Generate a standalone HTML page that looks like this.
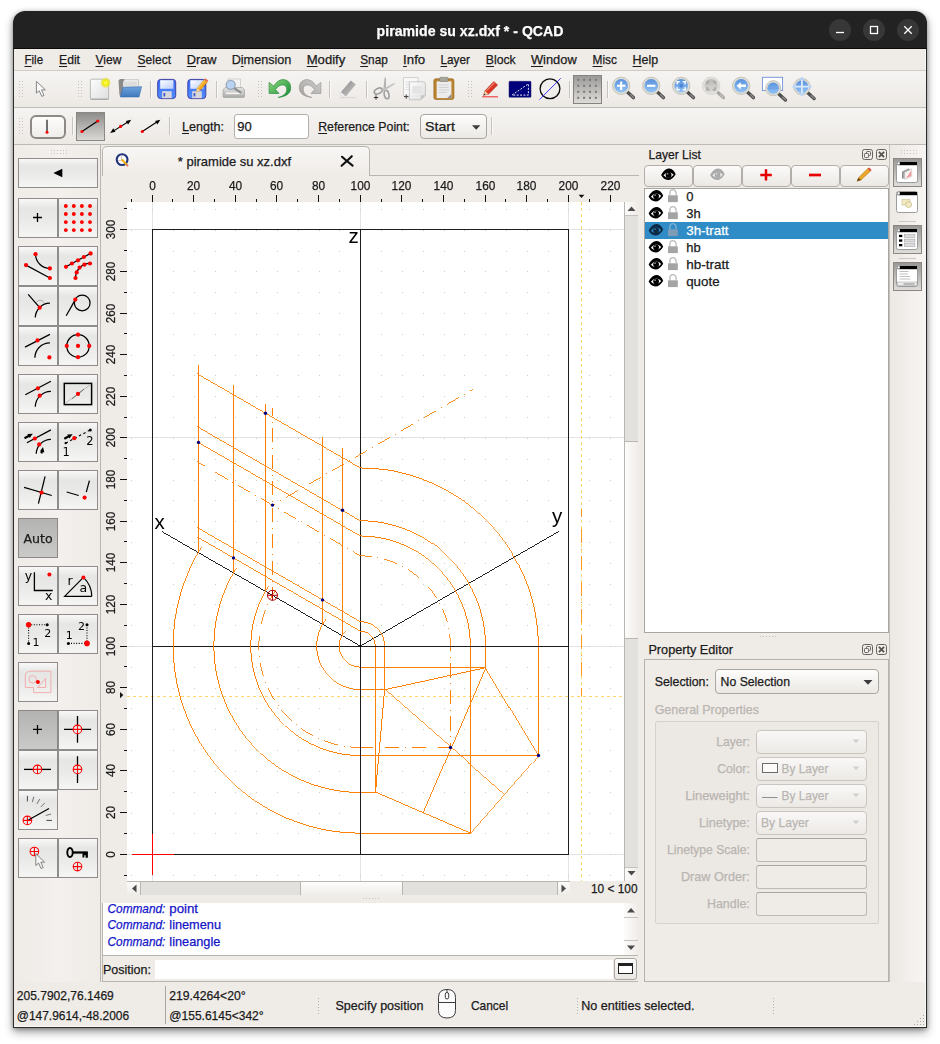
<!DOCTYPE html>
<html><head><meta charset="utf-8"><title>piramide su xz.dxf * - QCAD</title>
<style>
html,body{margin:0;padding:0;background:#fff;}
body{width:940px;height:1044px;position:relative;overflow:hidden;font-family:"Liberation Sans",sans-serif;font-size:13px;color:#1a1a1a;}
.a{position:absolute;box-sizing:border-box;}
#win{left:13px;top:11px;width:914px;height:1017px;background:#efebe7;border-radius:12px 12px 0 0;
 box-shadow:0 0 0 1px rgba(0,0,0,0.0), 0 4px 10px rgba(0,0,0,0.38), 0 1px 4px rgba(0,0,0,0.3);}
#title{left:13px;top:11px;width:914px;height:38px;background:#222222;border-radius:12px 12px 0 0;}
.wb{width:22px;height:22px;border-radius:11px;background:#373737;top:19px;}
.btn{border:1px solid #9e9a95;background:linear-gradient(#fbfaf9,#e6e3df);}
.btnp{border:1px solid #8c8883;background:linear-gradient(#b4b2af,#cfcdca);}
.tb{border:1px solid #8e8d8b;background:linear-gradient(#f8f8f8 0%,#e6e6e5 24%,#e9e9e8 50%,#f5f5f4 100%);}
.tbp{border:1px solid #8a8987;background:linear-gradient(#b3b3b2,#cacac9);}
.combo{border:1px solid #aaa6a1;border-radius:4px;background:linear-gradient(#fdfdfc,#ebe8e4);}
.combod{border:1px solid #c9c5c0;border-radius:4px;background:linear-gradient(#f9f8f7,#ece9e5);}
.edit{border:1px solid #b2aea9;border-radius:3px;background:#fff;}
.editd{border:1px solid #bdb9b4;border-top-color:#a9a5a0;border-radius:3px;background:#efebe7;}
svg{position:absolute;left:0;top:0;}
text{font-family:"Liberation Sans",sans-serif;font-size:13px;color:#1a1a1a;fill:currentColor;stroke:currentColor;stroke-width:0.25px;}
.dj{font-family:"DejaVu Sans",sans-serif;}
</style></head><body>

<div class="a" id="win"></div>
<div class="a " style="left:13px;top:49px;width:1px;height:979px;background:#2b2b2b"></div>
<div class="a " style="left:926px;top:49px;width:1px;height:979px;background:#2b2b2b"></div>
<div class="a " style="left:13px;top:1027px;width:914px;height:1px;background:#2b2b2b"></div>
<div class="a " style="left:925px;top:49px;width:1px;height:978px;background:#faf9f8"></div>
<div class="a " style="left:14px;top:1026px;width:912px;height:1px;background:#faf9f8"></div>
<div class="a" id="title"></div>
<div class="a " style="left:13px;top:48px;width:914px;height:1px;background:#0a0a0a"></div>
<div class="a wb" style="left:829px"></div>
<div class="a wb" style="left:863px"></div>
<div class="a wb" style="left:897px"></div>
<div class="a " style="left:14px;top:70px;width:912px;height:1px;background:#cfcbc6"></div>
<div class="a " style="left:14px;top:71px;width:912px;height:36px;background:linear-gradient(#f6f4f2,#ece9e5)"></div>
<div class="a " style="left:14px;top:107px;width:912px;height:1px;background:#c2beb9"></div>
<div class="a " style="left:14px;top:108px;width:912px;height:36px;background:linear-gradient(#f6f4f2,#ece9e5)"></div>
<div class="a " style="left:14px;top:144px;width:912px;height:1px;background:#bdb9b4"></div>
<div class="a" style="left:19px;top:81px;width:1px;height:16px;background:repeating-linear-gradient(#c5c1bc 0 1px,transparent 1px 3px)"></div><div class="a" style="left:22px;top:81px;width:1px;height:16px;background:repeating-linear-gradient(#c5c1bc 0 1px,transparent 1px 3px)"></div>
<div class="a" style="left:78px;top:81px;width:1px;height:16px;background:repeating-linear-gradient(#c5c1bc 0 1px,transparent 1px 3px)"></div><div class="a" style="left:81px;top:81px;width:1px;height:16px;background:repeating-linear-gradient(#c5c1bc 0 1px,transparent 1px 3px)"></div>
<div class="a" style="left:258px;top:81px;width:1px;height:16px;background:repeating-linear-gradient(#c5c1bc 0 1px,transparent 1px 3px)"></div><div class="a" style="left:261px;top:81px;width:1px;height:16px;background:repeating-linear-gradient(#c5c1bc 0 1px,transparent 1px 3px)"></div>
<div class="a" style="left:468px;top:81px;width:1px;height:16px;background:repeating-linear-gradient(#c5c1bc 0 1px,transparent 1px 3px)"></div><div class="a" style="left:471px;top:81px;width:1px;height:16px;background:repeating-linear-gradient(#c5c1bc 0 1px,transparent 1px 3px)"></div>
<div class="a" style="left:19px;top:118px;width:1px;height:16px;background:repeating-linear-gradient(#c5c1bc 0 1px,transparent 1px 3px)"></div><div class="a" style="left:22px;top:118px;width:1px;height:16px;background:repeating-linear-gradient(#c5c1bc 0 1px,transparent 1px 3px)"></div>
<div class="a " style="left:150px;top:81px;width:1px;height:17px;background:#c6c2bd"></div>
<div class="a " style="left:151px;top:81px;width:1px;height:17px;background:#fbfaf9"></div>
<div class="a " style="left:216px;top:81px;width:1px;height:17px;background:#c6c2bd"></div>
<div class="a " style="left:217px;top:81px;width:1px;height:17px;background:#fbfaf9"></div>
<div class="a " style="left:329px;top:81px;width:1px;height:17px;background:#c6c2bd"></div>
<div class="a " style="left:330px;top:81px;width:1px;height:17px;background:#fbfaf9"></div>
<div class="a " style="left:366px;top:81px;width:1px;height:17px;background:#c6c2bd"></div>
<div class="a " style="left:367px;top:81px;width:1px;height:17px;background:#fbfaf9"></div>
<div class="a " style="left:569px;top:81px;width:1px;height:17px;background:#c6c2bd"></div>
<div class="a " style="left:570px;top:81px;width:1px;height:17px;background:#fbfaf9"></div>
<div class="a " style="left:607px;top:81px;width:1px;height:17px;background:#c6c2bd"></div>
<div class="a " style="left:608px;top:81px;width:1px;height:17px;background:#fbfaf9"></div>
<div class="a " style="left:72px;top:117px;width:1px;height:18px;background:#c6c2bd"></div>
<div class="a " style="left:73px;top:117px;width:1px;height:18px;background:#fbfaf9"></div>
<div class="a " style="left:169px;top:117px;width:1px;height:18px;background:#c6c2bd"></div>
<div class="a " style="left:170px;top:117px;width:1px;height:18px;background:#fbfaf9"></div>
<div class="a " style="left:491px;top:117px;width:1px;height:18px;background:#c6c2bd"></div>
<div class="a " style="left:492px;top:117px;width:1px;height:18px;background:#fbfaf9"></div>
<div class="a " style="left:573px;top:75px;width:29px;height:29px;border:1px solid #858380;background:linear-gradient(#9b9a98,#dedcd9)"></div>
<div class="a " style="left:30px;top:115px;width:36px;height:24px;border:2px solid #8d8a86;border-radius:6px;background:linear-gradient(#fdfdfc,#efedea)"></div>
<div class="a " style="left:76px;top:112px;width:29px;height:29px;border:1px solid #8b8884;background:linear-gradient(#8e8d8b,#dad8d5)"></div>
<div class="a edit" style="left:234px;top:114px;width:75px;height:25px;"></div>
<div class="a combo" style="left:420px;top:114px;width:67px;height:25px;"></div>
<div class="a " style="left:14px;top:145px;width:87px;height:837px;background:linear-gradient(90deg,#efebe7,#f3f0ed 50%,#efebe7)"></div>
<div class="a " style="left:100px;top:145px;width:1px;height:837px;background:#b9b5b0"></div>
<div class="a" style="left:51px;top:150px;width:16px;height:1px;background:repeating-linear-gradient(90deg,#c5c1bc 0 1px,transparent 1px 3px)"></div><div class="a" style="left:51px;top:153px;width:16px;height:1px;background:repeating-linear-gradient(90deg,#c5c1bc 0 1px,transparent 1px 3px)"></div>
<div class="a tb" style="left:18px;top:158px;width:80px;height:30px;"></div>
<div class="a tb" style="left:18px;top:198px;width:40px;height:40px;"></div>
<div class="a tb" style="left:58px;top:198px;width:40px;height:40px;"></div>
<div class="a tb" style="left:18px;top:246px;width:40px;height:40px;"></div>
<div class="a tb" style="left:58px;top:246px;width:40px;height:40px;"></div>
<div class="a tb" style="left:18px;top:286px;width:40px;height:40px;"></div>
<div class="a tb" style="left:58px;top:286px;width:40px;height:40px;"></div>
<div class="a tb" style="left:18px;top:326px;width:40px;height:40px;"></div>
<div class="a tb" style="left:58px;top:326px;width:40px;height:40px;"></div>
<div class="a tb" style="left:18px;top:374px;width:40px;height:40px;"></div>
<div class="a tb" style="left:58px;top:374px;width:40px;height:40px;"></div>
<div class="a tb" style="left:18px;top:422px;width:40px;height:40px;"></div>
<div class="a tb" style="left:58px;top:422px;width:40px;height:40px;"></div>
<div class="a tb" style="left:18px;top:470px;width:40px;height:40px;"></div>
<div class="a tb" style="left:58px;top:470px;width:40px;height:40px;"></div>
<div class="a tbp" style="left:18px;top:518px;width:40px;height:40px;"></div>
<div class="a tb" style="left:18px;top:566px;width:40px;height:40px;"></div>
<div class="a tb" style="left:58px;top:566px;width:40px;height:40px;"></div>
<div class="a tb" style="left:18px;top:614px;width:40px;height:40px;"></div>
<div class="a tb" style="left:58px;top:614px;width:40px;height:40px;"></div>
<div class="a tb" style="left:18px;top:662px;width:40px;height:40px;"></div>
<div class="a tbp" style="left:18px;top:710px;width:40px;height:40px;"></div>
<div class="a tb" style="left:58px;top:710px;width:40px;height:40px;"></div>
<div class="a tb" style="left:18px;top:750px;width:40px;height:40px;"></div>
<div class="a tb" style="left:58px;top:750px;width:40px;height:40px;"></div>
<div class="a tb" style="left:18px;top:790px;width:40px;height:40px;"></div>
<div class="a tb" style="left:18px;top:838px;width:40px;height:40px;"></div>
<div class="a tb" style="left:58px;top:838px;width:40px;height:40px;"></div>
<div class="a " style="left:102px;top:175px;width:537px;height:1px;background:#b9b5b0"></div>
<div class="a " style="left:102px;top:146px;width:268px;height:30px;border:1px solid #b9b5b0;border-bottom:none;border-radius:5px 5px 0 0;background:linear-gradient(#f8f7f5,#efebe7)"></div>
<div class="a " style="left:127px;top:202px;width:497px;height:679px;background:#fff"></div>
<div class="a " style="left:624px;top:202px;width:14px;height:679px;background:#e3e1dd;border-left:1px solid #b9b5b0"></div>
<div class="a " style="left:625px;top:202px;width:13px;height:14px;background:linear-gradient(90deg,#fcfbfa,#efece8);border-bottom:1px solid #c5c1bc"></div>
<div class="a " style="left:625px;top:867px;width:13px;height:14px;background:linear-gradient(90deg,#fcfbfa,#efece8);border-top:1px solid #c5c1bc"></div>
<div class="a " style="left:625px;top:441px;width:13px;height:198px;background:linear-gradient(90deg,#fdfdfc,#f0ede9);border-top:1px solid #b9b5b0;border-bottom:1px solid #b9b5b0"></div>
<div class="a " style="left:127px;top:881px;width:443px;height:14px;background:#e3e1dd;border-top:1px solid #b9b5b0"></div>
<div class="a " style="left:127px;top:882px;width:14px;height:13px;background:linear-gradient(#fcfbfa,#efece8);border-right:1px solid #b9b5b0"></div>
<div class="a " style="left:557px;top:882px;width:13px;height:13px;background:linear-gradient(#fcfbfa,#efece8);border-left:1px solid #b9b5b0"></div>
<div class="a " style="left:300px;top:882px;width:103px;height:13px;background:linear-gradient(#fdfdfc,#f0ede9);border-left:1px solid #b9b5b0;border-right:1px solid #b9b5b0"></div>
<div class="a " style="left:102px;top:903px;width:536px;height:53px;background:#fff;border-left:1px solid #b9b5b0;border-bottom:1px solid #b9b5b0"></div>
<div class="a " style="left:624px;top:903px;width:14px;height:52px;background:#e3e1dd"></div>
<div class="a " style="left:624px;top:903px;width:14px;height:14px;background:linear-gradient(90deg,#fcfbfa,#efece8)"></div>
<div class="a " style="left:624px;top:941px;width:14px;height:14px;background:linear-gradient(90deg,#fcfbfa,#efece8)"></div>
<div class="a " style="left:624px;top:917px;width:14px;height:24px;background:linear-gradient(90deg,#fdfdfc,#f0ede9);border-top:1px solid #c5c1bc;border-bottom:1px solid #c5c1bc"></div>
<div class="a " style="left:102px;top:956px;width:1px;height:26px;background:#b9b5b0"></div>
<div class="a " style="left:102px;top:981px;width:536px;height:1px;background:#b9b5b0"></div>
<div class="a " style="left:155px;top:960px;width:458px;height:19px;background:#fff"></div>
<div class="a " style="left:614px;top:958px;width:23px;height:22px;border:1px solid #aaa6a1;border-radius:3px;background:linear-gradient(#fdfdfc,#e9e6e2)"></div>
<div class="a " style="left:644px;top:165px;width:49px;height:22px;border:1px solid #b2aea9;border-radius:4px;background:linear-gradient(#fcfbfa,#ebe8e4)"></div>
<div class="a " style="left:693px;top:165px;width:49px;height:22px;border:1px solid #b2aea9;border-radius:4px;background:linear-gradient(#fcfbfa,#ebe8e4)"></div>
<div class="a " style="left:742px;top:165px;width:49px;height:22px;border:1px solid #b2aea9;border-radius:4px;background:linear-gradient(#fcfbfa,#ebe8e4)"></div>
<div class="a " style="left:791px;top:165px;width:49px;height:22px;border:1px solid #b2aea9;border-radius:4px;background:linear-gradient(#fcfbfa,#ebe8e4)"></div>
<div class="a " style="left:840px;top:165px;width:49px;height:22px;border:1px solid #b2aea9;border-radius:4px;background:linear-gradient(#fcfbfa,#ebe8e4)"></div>
<div class="a " style="left:644px;top:188px;width:245px;height:445px;background:#fff;border:1px solid #a9a5a0"></div>
<div class="a " style="left:645px;top:222px;width:243px;height:17px;background:#308cc6"></div>
<div class="a " style="left:644px;top:659px;width:245px;height:323px;border:1px solid #b5b1ac;background:#efebe7"></div>
<div class="a combo" style="left:715px;top:669px;width:164px;height:25px;"></div>
<div class="a " style="left:655px;top:721px;width:224px;height:203px;border:1px solid #d5d1cc;border-radius:2px;background:#ece8e4"></div>
<div class="a combod" style="left:756px;top:730px;width:111px;height:24px;"></div>
<div class="a combod" style="left:756px;top:757px;width:111px;height:24px;"></div>
<div class="a combod" style="left:756px;top:784px;width:111px;height:24px;"></div>
<div class="a combod" style="left:756px;top:811px;width:111px;height:24px;"></div>
<div class="a editd" style="left:756px;top:838px;width:111px;height:24px;"></div>
<div class="a editd" style="left:756px;top:865px;width:111px;height:24px;"></div>
<div class="a editd" style="left:756px;top:892px;width:111px;height:24px;"></div>
<div class="a " style="left:762px;top:763px;width:16px;height:10px;border:1px solid #6c6c6c;background:#fcfbfa"></div>
<div class="a " style="left:862px;top:149px;width:11px;height:11px;border:1px solid #65625f;border-radius:2.5px"></div>
<div class="a " style="left:876px;top:149px;width:11px;height:11px;border:1px solid #65625f;border-radius:2.5px"></div>
<div class="a " style="left:862px;top:644px;width:11px;height:11px;border:1px solid #65625f;border-radius:2.5px"></div>
<div class="a " style="left:876px;top:644px;width:11px;height:11px;border:1px solid #65625f;border-radius:2.5px"></div>
<div class="a" style="left:760px;top:636px;width:16px;height:1px;background:repeating-linear-gradient(90deg,#c5c1bc 0 1px,transparent 1px 3px)"></div>
<div class="a" style="left:363px;top:898px;width:16px;height:1px;background:repeating-linear-gradient(90deg,#c5c1bc 0 1px,transparent 1px 3px)"></div>
<div class="a " style="left:890px;top:145px;width:36px;height:837px;background:linear-gradient(90deg,#ece8e4,#f3f0ed 60%,#f7f5f3)"></div>
<div class="a " style="left:889px;top:145px;width:1px;height:837px;background:#c4c0bb"></div>
<div class="a" style="left:901px;top:150px;width:16px;height:1px;background:repeating-linear-gradient(90deg,#c5c1bc 0 1px,transparent 1px 3px)"></div><div class="a" style="left:901px;top:153px;width:16px;height:1px;background:repeating-linear-gradient(90deg,#c5c1bc 0 1px,transparent 1px 3px)"></div>
<div class="a " style="left:893px;top:158px;width:29px;height:29px;border:1px solid #8b8884;background:linear-gradient(#9a9896,#deddda)"></div>
<div class="a " style="left:893px;top:225px;width:29px;height:29px;border:1px solid #8b8884;background:linear-gradient(#9a9896,#deddda)"></div>
<div class="a " style="left:893px;top:262px;width:29px;height:29px;border:1px solid #8b8884;background:linear-gradient(#9a9896,#deddda)"></div>
<div class="a " style="left:899px;top:221px;width:17px;height:1px;background:#cbc7c2"></div>
<div class="a " style="left:899px;top:258px;width:17px;height:1px;background:#cbc7c2"></div>
<div class="a " style="left:165px;top:986px;width:1px;height:38px;background:#a9a5a0"></div>
<div class="a " style="left:318px;top:998px;width:1px;height:16px;background:repeating-linear-gradient(#b5b1ac 0 1px,transparent 1px 3px)"></div>
<div class="a " style="left:577px;top:998px;width:1px;height:16px;background:repeating-linear-gradient(#b5b1ac 0 1px,transparent 1px 3px)"></div>
<div class="a " style="left:773px;top:998px;width:1px;height:16px;background:repeating-linear-gradient(#b5b1ac 0 1px,transparent 1px 3px)"></div>
<div class="a " style="left:923px;top:1024px;width:1px;height:1px;background:#aaa6a1"></div><div class="a " style="left:920px;top:1024px;width:1px;height:1px;background:#aaa6a1"></div><div class="a " style="left:917px;top:1024px;width:1px;height:1px;background:#aaa6a1"></div><div class="a " style="left:914px;top:1024px;width:1px;height:1px;background:#aaa6a1"></div><div class="a " style="left:923px;top:1021px;width:1px;height:1px;background:#aaa6a1"></div><div class="a " style="left:920px;top:1021px;width:1px;height:1px;background:#aaa6a1"></div><div class="a " style="left:917px;top:1021px;width:1px;height:1px;background:#aaa6a1"></div><div class="a " style="left:923px;top:1018px;width:1px;height:1px;background:#aaa6a1"></div><div class="a " style="left:920px;top:1018px;width:1px;height:1px;background:#aaa6a1"></div><div class="a " style="left:923px;top:1015px;width:1px;height:1px;background:#aaa6a1"></div>
<svg width="940" height="1044" viewBox="0 0 940 1044">
<defs><clipPath id="cv"><rect x="127" y="202" width="497" height="679"/></clipPath></defs>
<g shape-rendering="crispEdges" stroke="#111" stroke-width="1">
<line x1="131.50" y1="199.00" x2="131.50" y2="202.00" />
<line x1="152.50" y1="195.00" x2="152.50" y2="202.00" />
<line x1="172.50" y1="199.00" x2="172.50" y2="202.00" />
<line x1="193.50" y1="195.00" x2="193.50" y2="202.00" />
<line x1="214.50" y1="199.00" x2="214.50" y2="202.00" />
<line x1="235.50" y1="195.00" x2="235.50" y2="202.00" />
<line x1="256.50" y1="199.00" x2="256.50" y2="202.00" />
<line x1="276.50" y1="195.00" x2="276.50" y2="202.00" />
<line x1="297.50" y1="199.00" x2="297.50" y2="202.00" />
<line x1="318.50" y1="195.00" x2="318.50" y2="202.00" />
<line x1="339.50" y1="199.00" x2="339.50" y2="202.00" />
<line x1="360.50" y1="195.00" x2="360.50" y2="202.00" />
<line x1="381.50" y1="199.00" x2="381.50" y2="202.00" />
<line x1="401.50" y1="195.00" x2="401.50" y2="202.00" />
<line x1="422.50" y1="199.00" x2="422.50" y2="202.00" />
<line x1="443.50" y1="195.00" x2="443.50" y2="202.00" />
<line x1="464.50" y1="199.00" x2="464.50" y2="202.00" />
<line x1="485.50" y1="195.00" x2="485.50" y2="202.00" />
<line x1="505.50" y1="199.00" x2="505.50" y2="202.00" />
<line x1="526.50" y1="195.00" x2="526.50" y2="202.00" />
<line x1="547.50" y1="199.00" x2="547.50" y2="202.00" />
<line x1="568.50" y1="195.00" x2="568.50" y2="202.00" />
<line x1="589.50" y1="199.00" x2="589.50" y2="202.00" />
<line x1="610.50" y1="195.00" x2="610.50" y2="202.00" />
<line x1="124.00" y1="875.50" x2="127.00" y2="875.50" />
<line x1="120.00" y1="854.50" x2="127.00" y2="854.50" />
<line x1="124.00" y1="833.50" x2="127.00" y2="833.50" />
<line x1="120.00" y1="812.50" x2="127.00" y2="812.50" />
<line x1="124.00" y1="791.50" x2="127.00" y2="791.50" />
<line x1="120.00" y1="770.50" x2="127.00" y2="770.50" />
<line x1="124.00" y1="750.50" x2="127.00" y2="750.50" />
<line x1="120.00" y1="729.50" x2="127.00" y2="729.50" />
<line x1="124.00" y1="708.50" x2="127.00" y2="708.50" />
<line x1="120.00" y1="687.50" x2="127.00" y2="687.50" />
<line x1="124.00" y1="666.50" x2="127.00" y2="666.50" />
<line x1="120.00" y1="646.50" x2="127.00" y2="646.50" />
<line x1="124.00" y1="625.50" x2="127.00" y2="625.50" />
<line x1="120.00" y1="604.50" x2="127.00" y2="604.50" />
<line x1="124.00" y1="583.50" x2="127.00" y2="583.50" />
<line x1="120.00" y1="562.50" x2="127.00" y2="562.50" />
<line x1="124.00" y1="541.50" x2="127.00" y2="541.50" />
<line x1="120.00" y1="521.50" x2="127.00" y2="521.50" />
<line x1="124.00" y1="500.50" x2="127.00" y2="500.50" />
<line x1="120.00" y1="479.50" x2="127.00" y2="479.50" />
<line x1="124.00" y1="458.50" x2="127.00" y2="458.50" />
<line x1="120.00" y1="437.50" x2="127.00" y2="437.50" />
<line x1="124.00" y1="417.50" x2="127.00" y2="417.50" />
<line x1="120.00" y1="396.50" x2="127.00" y2="396.50" />
<line x1="124.00" y1="375.50" x2="127.00" y2="375.50" />
<line x1="120.00" y1="354.50" x2="127.00" y2="354.50" />
<line x1="124.00" y1="333.50" x2="127.00" y2="333.50" />
<line x1="120.00" y1="313.50" x2="127.00" y2="313.50" />
<line x1="124.00" y1="292.50" x2="127.00" y2="292.50" />
<line x1="120.00" y1="271.50" x2="127.00" y2="271.50" />
<line x1="124.00" y1="250.50" x2="127.00" y2="250.50" />
<line x1="120.00" y1="229.50" x2="127.00" y2="229.50" />
<line x1="124.00" y1="208.50" x2="127.00" y2="208.50" />
</g>
<path d="M578.6 194.8h5.8l-2.900 3.300z" fill="#111"/>
<path d="M120 692v6.200l3.300-3.100z" fill="#111"/>
<g clip-path="url(#cv)"><g shape-rendering="crispEdges" fill="none" stroke-width="1">
<g stroke="#e3e3e3"><line x1="152.50" y1="202.00" x2="152.50" y2="881.00" /><line x1="360.50" y1="202.00" x2="360.50" y2="881.00" /><line x1="568.50" y1="202.00" x2="568.50" y2="881.00" /><line x1="127.00" y1="854.50" x2="624.00" y2="854.50" /><line x1="127.00" y1="646.50" x2="624.00" y2="646.50" /><line x1="127.00" y1="437.50" x2="624.00" y2="437.50" /><line x1="127.00" y1="229.50" x2="624.00" y2="229.50" /></g>
<path stroke="#cbcbcb" d="M131 875.5h1M152 875.5h1M173 875.5h1M194 875.5h1M215 875.5h1M235 875.5h1M256 875.5h1M277 875.5h1M298 875.5h1M319 875.5h1M339 875.5h1M360 875.5h1M381 875.5h1M402 875.5h1M423 875.5h1M444 875.5h1M464 875.5h1M485 875.5h1M506 875.5h1M527 875.5h1M548 875.5h1M568 875.5h1M589 875.5h1M610 875.5h1M131 854.5h1M152 854.5h1M173 854.5h1M194 854.5h1M215 854.5h1M235 854.5h1M256 854.5h1M277 854.5h1M298 854.5h1M319 854.5h1M339 854.5h1M360 854.5h1M381 854.5h1M402 854.5h1M423 854.5h1M444 854.5h1M464 854.5h1M485 854.5h1M506 854.5h1M527 854.5h1M548 854.5h1M568 854.5h1M589 854.5h1M610 854.5h1M131 833.5h1M152 833.5h1M173 833.5h1M194 833.5h1M215 833.5h1M235 833.5h1M256 833.5h1M277 833.5h1M298 833.5h1M319 833.5h1M339 833.5h1M360 833.5h1M381 833.5h1M402 833.5h1M423 833.5h1M444 833.5h1M464 833.5h1M485 833.5h1M506 833.5h1M527 833.5h1M548 833.5h1M568 833.5h1M589 833.5h1M610 833.5h1M131 813.5h1M152 813.5h1M173 813.5h1M194 813.5h1M215 813.5h1M235 813.5h1M256 813.5h1M277 813.5h1M298 813.5h1M319 813.5h1M339 813.5h1M360 813.5h1M381 813.5h1M402 813.5h1M423 813.5h1M444 813.5h1M464 813.5h1M485 813.5h1M506 813.5h1M527 813.5h1M548 813.5h1M568 813.5h1M589 813.5h1M610 813.5h1M131 792.5h1M152 792.5h1M173 792.5h1M194 792.5h1M215 792.5h1M235 792.5h1M256 792.5h1M277 792.5h1M298 792.5h1M319 792.5h1M339 792.5h1M360 792.5h1M381 792.5h1M402 792.5h1M423 792.5h1M444 792.5h1M464 792.5h1M485 792.5h1M506 792.5h1M527 792.5h1M548 792.5h1M568 792.5h1M589 792.5h1M610 792.5h1M131 771.5h1M152 771.5h1M173 771.5h1M194 771.5h1M215 771.5h1M235 771.5h1M256 771.5h1M277 771.5h1M298 771.5h1M319 771.5h1M339 771.5h1M360 771.5h1M381 771.5h1M402 771.5h1M423 771.5h1M444 771.5h1M464 771.5h1M485 771.5h1M506 771.5h1M527 771.5h1M548 771.5h1M568 771.5h1M589 771.5h1M610 771.5h1M131 750.5h1M152 750.5h1M173 750.5h1M194 750.5h1M215 750.5h1M235 750.5h1M256 750.5h1M277 750.5h1M298 750.5h1M319 750.5h1M339 750.5h1M360 750.5h1M381 750.5h1M402 750.5h1M423 750.5h1M444 750.5h1M464 750.5h1M485 750.5h1M506 750.5h1M527 750.5h1M548 750.5h1M568 750.5h1M589 750.5h1M610 750.5h1M131 729.5h1M152 729.5h1M173 729.5h1M194 729.5h1M215 729.5h1M235 729.5h1M256 729.5h1M277 729.5h1M298 729.5h1M319 729.5h1M339 729.5h1M360 729.5h1M381 729.5h1M402 729.5h1M423 729.5h1M444 729.5h1M464 729.5h1M485 729.5h1M506 729.5h1M527 729.5h1M548 729.5h1M568 729.5h1M589 729.5h1M610 729.5h1M131 708.5h1M152 708.5h1M173 708.5h1M194 708.5h1M215 708.5h1M235 708.5h1M256 708.5h1M277 708.5h1M298 708.5h1M319 708.5h1M339 708.5h1M360 708.5h1M381 708.5h1M402 708.5h1M423 708.5h1M444 708.5h1M464 708.5h1M485 708.5h1M506 708.5h1M527 708.5h1M548 708.5h1M568 708.5h1M589 708.5h1M610 708.5h1M131 688.5h1M152 688.5h1M173 688.5h1M194 688.5h1M215 688.5h1M235 688.5h1M256 688.5h1M277 688.5h1M298 688.5h1M319 688.5h1M339 688.5h1M360 688.5h1M381 688.5h1M402 688.5h1M423 688.5h1M444 688.5h1M464 688.5h1M485 688.5h1M506 688.5h1M527 688.5h1M548 688.5h1M568 688.5h1M589 688.5h1M610 688.5h1M131 667.5h1M152 667.5h1M173 667.5h1M194 667.5h1M215 667.5h1M235 667.5h1M256 667.5h1M277 667.5h1M298 667.5h1M319 667.5h1M339 667.5h1M360 667.5h1M381 667.5h1M402 667.5h1M423 667.5h1M444 667.5h1M464 667.5h1M485 667.5h1M506 667.5h1M527 667.5h1M548 667.5h1M568 667.5h1M589 667.5h1M610 667.5h1M131 646.5h1M152 646.5h1M173 646.5h1M194 646.5h1M215 646.5h1M235 646.5h1M256 646.5h1M277 646.5h1M298 646.5h1M319 646.5h1M339 646.5h1M360 646.5h1M381 646.5h1M402 646.5h1M423 646.5h1M444 646.5h1M464 646.5h1M485 646.5h1M506 646.5h1M527 646.5h1M548 646.5h1M568 646.5h1M589 646.5h1M610 646.5h1M131 625.5h1M152 625.5h1M173 625.5h1M194 625.5h1M215 625.5h1M235 625.5h1M256 625.5h1M277 625.5h1M298 625.5h1M319 625.5h1M339 625.5h1M360 625.5h1M381 625.5h1M402 625.5h1M423 625.5h1M444 625.5h1M464 625.5h1M485 625.5h1M506 625.5h1M527 625.5h1M548 625.5h1M568 625.5h1M589 625.5h1M610 625.5h1M131 604.5h1M152 604.5h1M173 604.5h1M194 604.5h1M215 604.5h1M235 604.5h1M256 604.5h1M277 604.5h1M298 604.5h1M319 604.5h1M339 604.5h1M360 604.5h1M381 604.5h1M402 604.5h1M423 604.5h1M444 604.5h1M464 604.5h1M485 604.5h1M506 604.5h1M527 604.5h1M548 604.5h1M568 604.5h1M589 604.5h1M610 604.5h1M131 584.5h1M152 584.5h1M173 584.5h1M194 584.5h1M215 584.5h1M235 584.5h1M256 584.5h1M277 584.5h1M298 584.5h1M319 584.5h1M339 584.5h1M360 584.5h1M381 584.5h1M402 584.5h1M423 584.5h1M444 584.5h1M464 584.5h1M485 584.5h1M506 584.5h1M527 584.5h1M548 584.5h1M568 584.5h1M589 584.5h1M610 584.5h1M131 563.5h1M152 563.5h1M173 563.5h1M194 563.5h1M215 563.5h1M235 563.5h1M256 563.5h1M277 563.5h1M298 563.5h1M319 563.5h1M339 563.5h1M360 563.5h1M381 563.5h1M402 563.5h1M423 563.5h1M444 563.5h1M464 563.5h1M485 563.5h1M506 563.5h1M527 563.5h1M548 563.5h1M568 563.5h1M589 563.5h1M610 563.5h1M131 542.5h1M152 542.5h1M173 542.5h1M194 542.5h1M215 542.5h1M235 542.5h1M256 542.5h1M277 542.5h1M298 542.5h1M319 542.5h1M339 542.5h1M360 542.5h1M381 542.5h1M402 542.5h1M423 542.5h1M444 542.5h1M464 542.5h1M485 542.5h1M506 542.5h1M527 542.5h1M548 542.5h1M568 542.5h1M589 542.5h1M610 542.5h1M131 521.5h1M152 521.5h1M173 521.5h1M194 521.5h1M215 521.5h1M235 521.5h1M256 521.5h1M277 521.5h1M298 521.5h1M319 521.5h1M339 521.5h1M360 521.5h1M381 521.5h1M402 521.5h1M423 521.5h1M444 521.5h1M464 521.5h1M485 521.5h1M506 521.5h1M527 521.5h1M548 521.5h1M568 521.5h1M589 521.5h1M610 521.5h1M131 500.5h1M152 500.5h1M173 500.5h1M194 500.5h1M215 500.5h1M235 500.5h1M256 500.5h1M277 500.5h1M298 500.5h1M319 500.5h1M339 500.5h1M360 500.5h1M381 500.5h1M402 500.5h1M423 500.5h1M444 500.5h1M464 500.5h1M485 500.5h1M506 500.5h1M527 500.5h1M548 500.5h1M568 500.5h1M589 500.5h1M610 500.5h1M131 480.5h1M152 480.5h1M173 480.5h1M194 480.5h1M215 480.5h1M235 480.5h1M256 480.5h1M277 480.5h1M298 480.5h1M319 480.5h1M339 480.5h1M360 480.5h1M381 480.5h1M402 480.5h1M423 480.5h1M444 480.5h1M464 480.5h1M485 480.5h1M506 480.5h1M527 480.5h1M548 480.5h1M568 480.5h1M589 480.5h1M610 480.5h1M131 459.5h1M152 459.5h1M173 459.5h1M194 459.5h1M215 459.5h1M235 459.5h1M256 459.5h1M277 459.5h1M298 459.5h1M319 459.5h1M339 459.5h1M360 459.5h1M381 459.5h1M402 459.5h1M423 459.5h1M444 459.5h1M464 459.5h1M485 459.5h1M506 459.5h1M527 459.5h1M548 459.5h1M568 459.5h1M589 459.5h1M610 459.5h1M131 438.5h1M152 438.5h1M173 438.5h1M194 438.5h1M215 438.5h1M235 438.5h1M256 438.5h1M277 438.5h1M298 438.5h1M319 438.5h1M339 438.5h1M360 438.5h1M381 438.5h1M402 438.5h1M423 438.5h1M444 438.5h1M464 438.5h1M485 438.5h1M506 438.5h1M527 438.5h1M548 438.5h1M568 438.5h1M589 438.5h1M610 438.5h1M131 417.5h1M152 417.5h1M173 417.5h1M194 417.5h1M215 417.5h1M235 417.5h1M256 417.5h1M277 417.5h1M298 417.5h1M319 417.5h1M339 417.5h1M360 417.5h1M381 417.5h1M402 417.5h1M423 417.5h1M444 417.5h1M464 417.5h1M485 417.5h1M506 417.5h1M527 417.5h1M548 417.5h1M568 417.5h1M589 417.5h1M610 417.5h1M131 396.5h1M152 396.5h1M173 396.5h1M194 396.5h1M215 396.5h1M235 396.5h1M256 396.5h1M277 396.5h1M298 396.5h1M319 396.5h1M339 396.5h1M360 396.5h1M381 396.5h1M402 396.5h1M423 396.5h1M444 396.5h1M464 396.5h1M485 396.5h1M506 396.5h1M527 396.5h1M548 396.5h1M568 396.5h1M589 396.5h1M610 396.5h1M131 375.5h1M152 375.5h1M173 375.5h1M194 375.5h1M215 375.5h1M235 375.5h1M256 375.5h1M277 375.5h1M298 375.5h1M319 375.5h1M339 375.5h1M360 375.5h1M381 375.5h1M402 375.5h1M423 375.5h1M444 375.5h1M464 375.5h1M485 375.5h1M506 375.5h1M527 375.5h1M548 375.5h1M568 375.5h1M589 375.5h1M610 375.5h1M131 355.5h1M152 355.5h1M173 355.5h1M194 355.5h1M215 355.5h1M235 355.5h1M256 355.5h1M277 355.5h1M298 355.5h1M319 355.5h1M339 355.5h1M360 355.5h1M381 355.5h1M402 355.5h1M423 355.5h1M444 355.5h1M464 355.5h1M485 355.5h1M506 355.5h1M527 355.5h1M548 355.5h1M568 355.5h1M589 355.5h1M610 355.5h1M131 334.5h1M152 334.5h1M173 334.5h1M194 334.5h1M215 334.5h1M235 334.5h1M256 334.5h1M277 334.5h1M298 334.5h1M319 334.5h1M339 334.5h1M360 334.5h1M381 334.5h1M402 334.5h1M423 334.5h1M444 334.5h1M464 334.5h1M485 334.5h1M506 334.5h1M527 334.5h1M548 334.5h1M568 334.5h1M589 334.5h1M610 334.5h1M131 313.5h1M152 313.5h1M173 313.5h1M194 313.5h1M215 313.5h1M235 313.5h1M256 313.5h1M277 313.5h1M298 313.5h1M319 313.5h1M339 313.5h1M360 313.5h1M381 313.5h1M402 313.5h1M423 313.5h1M444 313.5h1M464 313.5h1M485 313.5h1M506 313.5h1M527 313.5h1M548 313.5h1M568 313.5h1M589 313.5h1M610 313.5h1M131 292.5h1M152 292.5h1M173 292.5h1M194 292.5h1M215 292.5h1M235 292.5h1M256 292.5h1M277 292.5h1M298 292.5h1M319 292.5h1M339 292.5h1M360 292.5h1M381 292.5h1M402 292.5h1M423 292.5h1M444 292.5h1M464 292.5h1M485 292.5h1M506 292.5h1M527 292.5h1M548 292.5h1M568 292.5h1M589 292.5h1M610 292.5h1M131 271.5h1M152 271.5h1M173 271.5h1M194 271.5h1M215 271.5h1M235 271.5h1M256 271.5h1M277 271.5h1M298 271.5h1M319 271.5h1M339 271.5h1M360 271.5h1M381 271.5h1M402 271.5h1M423 271.5h1M444 271.5h1M464 271.5h1M485 271.5h1M506 271.5h1M527 271.5h1M548 271.5h1M568 271.5h1M589 271.5h1M610 271.5h1M131 251.5h1M152 251.5h1M173 251.5h1M194 251.5h1M215 251.5h1M235 251.5h1M256 251.5h1M277 251.5h1M298 251.5h1M319 251.5h1M339 251.5h1M360 251.5h1M381 251.5h1M402 251.5h1M423 251.5h1M444 251.5h1M464 251.5h1M485 251.5h1M506 251.5h1M527 251.5h1M548 251.5h1M568 251.5h1M589 251.5h1M610 251.5h1M131 230.5h1M152 230.5h1M173 230.5h1M194 230.5h1M215 230.5h1M235 230.5h1M256 230.5h1M277 230.5h1M298 230.5h1M319 230.5h1M339 230.5h1M360 230.5h1M381 230.5h1M402 230.5h1M423 230.5h1M444 230.5h1M464 230.5h1M485 230.5h1M506 230.5h1M527 230.5h1M548 230.5h1M568 230.5h1M589 230.5h1M610 230.5h1M131 209.5h1M152 209.5h1M173 209.5h1M194 209.5h1M215 209.5h1M235 209.5h1M256 209.5h1M277 209.5h1M298 209.5h1M319 209.5h1M339 209.5h1M360 209.5h1M381 209.5h1M402 209.5h1M423 209.5h1M444 209.5h1M464 209.5h1M485 209.5h1M506 209.5h1M527 209.5h1M548 209.5h1M568 209.5h1M589 209.5h1M610 209.5h1"/>
<g stroke="#ffd970" stroke-dasharray="3 3"><line x1="127.00" y1="696.50" x2="624.00" y2="696.50" /><line x1="581.50" y1="202.00" x2="581.50" y2="881.00" /></g>
<g stroke="#1c1c1c">
<rect x="152.5" y="229.5" width="416" height="625"/>
<line x1="360.50" y1="229.50" x2="360.50" y2="854.50" /><line x1="152.50" y1="646.50" x2="568.50" y2="646.50" />
</g><g stroke="#000">
<line x1="360.25" y1="646.05" x2="161.96" y2="531.57" stroke-width="0.866" /><line x1="360.25" y1="646.05" x2="558.54" y2="531.57" stroke-width="0.866" />
</g>
<g stroke="#ff7f00"><line x1="485.50" y1="667.50" x2="538.50" y2="755.50" stroke-width="0.857" /><line x1="538.50" y1="755.50" x2="470.50" y2="833.50" stroke-width="0.754" /><line x1="470.50" y1="833.50" x2="375.50" y2="792.50" stroke-width="0.918" /><line x1="375.50" y1="792.50" x2="384.50" y2="689.50" stroke-width="0.996" /><line x1="384.50" y1="689.50" x2="485.50" y2="667.50" stroke-width="0.977" /><line x1="485.50" y1="667.50" x2="423.00" y2="813.00" stroke-width="0.919" /><line x1="384.50" y1="689.50" x2="504.50" y2="794.50" stroke-width="0.753" /><line x1="485.50" y1="667.50" x2="485.50" y2="646.50" /><line x1="485.50" y1="667.50" x2="360.50" y2="667.50" /><line x1="485.55" y1="646.05" x2="485.26" y2="637.50" /><line x1="485.26" y1="637.50" x2="484.38" y2="628.99" stroke-width="0.995" /><line x1="484.38" y1="628.99" x2="482.93" y2="620.56" stroke-width="0.985" /><line x1="482.93" y1="620.56" x2="480.90" y2="612.24" stroke-width="0.972" /><line x1="480.90" y1="612.24" x2="478.32" y2="604.09" stroke-width="0.953" /><line x1="478.32" y1="604.09" x2="475.18" y2="596.13" stroke-width="0.930" /><line x1="475.18" y1="596.13" x2="471.50" y2="588.40" stroke-width="0.903" /><line x1="471.50" y1="588.40" x2="467.31" y2="580.95" stroke-width="0.872" /><line x1="467.31" y1="580.95" x2="462.62" y2="573.79" stroke-width="0.836" /><line x1="462.62" y1="573.79" x2="457.45" y2="566.97" stroke-width="0.797" /><line x1="457.45" y1="566.97" x2="451.82" y2="560.53" stroke-width="0.754" /><line x1="451.82" y1="560.53" x2="445.77" y2="554.48" stroke-width="0.707" /><line x1="445.77" y1="554.48" x2="439.33" y2="548.85" stroke-width="0.754" /><line x1="439.33" y1="548.85" x2="432.51" y2="543.68" stroke-width="0.797" /><line x1="432.51" y1="543.68" x2="425.35" y2="538.99" stroke-width="0.836" /><line x1="425.35" y1="538.99" x2="417.90" y2="534.80" stroke-width="0.872" /><line x1="417.90" y1="534.80" x2="410.17" y2="531.12" stroke-width="0.903" /><line x1="410.17" y1="531.12" x2="402.21" y2="527.98" stroke-width="0.930" /><line x1="402.21" y1="527.98" x2="394.06" y2="525.40" stroke-width="0.953" /><line x1="394.06" y1="525.40" x2="385.74" y2="523.37" stroke-width="0.972" /><line x1="385.74" y1="523.37" x2="377.31" y2="521.92" stroke-width="0.985" /><line x1="377.31" y1="521.92" x2="368.80" y2="521.04" stroke-width="0.995" /><line x1="368.80" y1="521.04" x2="360.25" y2="520.75" /><line x1="360.25" y1="520.75" x2="197.30" y2="426.67" stroke-width="0.866" /><line x1="345.76" y1="630.85" x2="344.76" y2="631.87" stroke-width="0.714" /><line x1="344.76" y1="631.87" x2="343.83" y2="632.95" stroke-width="0.760" /><line x1="343.83" y1="632.95" x2="342.98" y2="634.10" stroke-width="0.803" /><line x1="342.98" y1="634.10" x2="342.21" y2="635.30" stroke-width="0.841" /><line x1="342.21" y1="635.30" x2="341.52" y2="636.55" stroke-width="0.876" /><line x1="341.52" y1="636.55" x2="340.92" y2="637.85" stroke-width="0.907" /><line x1="340.92" y1="637.85" x2="340.41" y2="639.18" stroke-width="0.933" /><line x1="340.41" y1="639.18" x2="339.98" y2="640.54" stroke-width="0.956" /><line x1="339.98" y1="640.54" x2="339.66" y2="641.93" stroke-width="0.973" /><line x1="339.66" y1="641.93" x2="339.43" y2="643.34" stroke-width="0.987" /><line x1="339.43" y1="643.34" x2="339.29" y2="644.76" stroke-width="0.995" /><line x1="339.29" y1="644.76" x2="339.25" y2="646.19" /><line x1="339.25" y1="646.19" x2="339.31" y2="647.62" /><line x1="339.31" y1="647.62" x2="339.46" y2="649.04" stroke-width="0.994" /><line x1="339.46" y1="649.04" x2="339.71" y2="650.44" stroke-width="0.984" /><line x1="339.71" y1="650.44" x2="340.06" y2="651.83" stroke-width="0.970" /><line x1="340.06" y1="651.83" x2="340.50" y2="653.19" stroke-width="0.951" /><line x1="340.50" y1="653.19" x2="341.03" y2="654.51" stroke-width="0.928" /><line x1="341.03" y1="654.51" x2="341.65" y2="655.80" stroke-width="0.901" /><line x1="341.65" y1="655.80" x2="342.36" y2="657.04" stroke-width="0.869" /><line x1="342.36" y1="657.04" x2="343.14" y2="658.23" stroke-width="0.834" /><line x1="343.14" y1="658.23" x2="344.01" y2="659.36" stroke-width="0.794" /><line x1="344.01" y1="659.36" x2="344.95" y2="660.44" stroke-width="0.751" /><line x1="344.95" y1="660.44" x2="345.97" y2="661.44" stroke-width="0.709" /><line x1="345.97" y1="661.44" x2="347.04" y2="662.38" stroke-width="0.756" /><line x1="347.04" y1="662.38" x2="348.18" y2="663.24" stroke-width="0.798" /><line x1="348.18" y1="663.24" x2="349.38" y2="664.02" stroke-width="0.838" /><line x1="349.38" y1="664.02" x2="350.63" y2="664.72" stroke-width="0.873" /><line x1="350.63" y1="664.72" x2="351.92" y2="665.33" stroke-width="0.904" /><line x1="351.92" y1="665.33" x2="353.25" y2="665.85" stroke-width="0.931" /><line x1="353.25" y1="665.85" x2="354.61" y2="666.28" stroke-width="0.954" /><line x1="354.61" y1="666.28" x2="356.00" y2="666.61" stroke-width="0.972" /><line x1="356.00" y1="666.61" x2="357.40" y2="666.86" stroke-width="0.986" /><line x1="357.40" y1="666.86" x2="358.82" y2="667.00" stroke-width="0.995" /><line x1="358.82" y1="667.00" x2="360.25" y2="667.05" /><line x1="342.50" y1="635.55" x2="342.50" y2="448.20" /><line x1="538.50" y1="755.50" x2="538.50" y2="646.50" /><line x1="538.50" y1="755.50" x2="360.50" y2="755.50" /><line x1="538.35" y1="646.05" x2="537.93" y2="633.90" /><line x1="537.93" y1="633.90" x2="536.69" y2="621.80" stroke-width="0.995" /><line x1="536.69" y1="621.80" x2="534.62" y2="609.81" stroke-width="0.985" /><line x1="534.62" y1="609.81" x2="531.75" y2="598.00" stroke-width="0.972" /><line x1="531.75" y1="598.00" x2="528.07" y2="586.41" stroke-width="0.953" /><line x1="528.07" y1="586.41" x2="523.61" y2="575.09" stroke-width="0.930" /><line x1="523.61" y1="575.09" x2="518.38" y2="564.11" stroke-width="0.903" /><line x1="518.38" y1="564.11" x2="512.42" y2="553.51" stroke-width="0.872" /><line x1="512.42" y1="553.51" x2="505.75" y2="543.34" stroke-width="0.836" /><line x1="505.75" y1="543.34" x2="498.40" y2="533.65" stroke-width="0.797" /><line x1="498.40" y1="533.65" x2="490.41" y2="524.49" stroke-width="0.754" /><line x1="490.41" y1="524.49" x2="481.81" y2="515.89" stroke-width="0.707" /><line x1="481.81" y1="515.89" x2="472.65" y2="507.90" stroke-width="0.754" /><line x1="472.65" y1="507.90" x2="462.96" y2="500.55" stroke-width="0.797" /><line x1="462.96" y1="500.55" x2="452.79" y2="493.88" stroke-width="0.836" /><line x1="452.79" y1="493.88" x2="442.19" y2="487.92" stroke-width="0.872" /><line x1="442.19" y1="487.92" x2="431.21" y2="482.69" stroke-width="0.903" /><line x1="431.21" y1="482.69" x2="419.89" y2="478.23" stroke-width="0.930" /><line x1="419.89" y1="478.23" x2="408.30" y2="474.55" stroke-width="0.953" /><line x1="408.30" y1="474.55" x2="396.49" y2="471.68" stroke-width="0.972" /><line x1="396.49" y1="471.68" x2="384.50" y2="469.61" stroke-width="0.985" /><line x1="384.50" y1="469.61" x2="372.40" y2="468.37" stroke-width="0.995" /><line x1="372.40" y1="468.37" x2="360.25" y2="467.95" /><line x1="360.25" y1="467.95" x2="197.30" y2="373.87" stroke-width="0.866" /><line x1="268.56" y1="586.19" x2="264.63" y2="592.68" stroke-width="0.856" /><line x1="264.63" y1="592.68" x2="261.17" y2="599.44" stroke-width="0.890" /><line x1="261.17" y1="599.44" x2="258.18" y2="606.41" stroke-width="0.919" /><line x1="258.18" y1="606.41" x2="255.68" y2="613.58" stroke-width="0.944" /><line x1="255.68" y1="613.58" x2="253.68" y2="620.90" stroke-width="0.965" /><line x1="253.68" y1="620.90" x2="252.19" y2="628.34" stroke-width="0.981" /><line x1="252.19" y1="628.34" x2="251.22" y2="635.87" stroke-width="0.992" /><line x1="251.22" y1="635.87" x2="250.78" y2="643.45" stroke-width="0.998" /><line x1="250.78" y1="643.45" x2="250.86" y2="651.04" /><line x1="250.86" y1="651.04" x2="251.47" y2="658.60" stroke-width="0.997" /><line x1="251.47" y1="658.60" x2="252.60" y2="666.11" stroke-width="0.989" /><line x1="252.60" y1="666.11" x2="254.25" y2="673.52" stroke-width="0.976" /><line x1="254.25" y1="673.52" x2="256.41" y2="680.79" stroke-width="0.959" /><line x1="256.41" y1="680.79" x2="259.06" y2="687.90" stroke-width="0.937" /><line x1="259.06" y1="687.90" x2="262.21" y2="694.81" stroke-width="0.910" /><line x1="262.21" y1="694.81" x2="265.82" y2="701.49" stroke-width="0.879" /><line x1="265.82" y1="701.49" x2="269.89" y2="707.90" stroke-width="0.844" /><line x1="269.89" y1="707.90" x2="274.39" y2="714.01" stroke-width="0.805" /><line x1="274.39" y1="714.01" x2="279.30" y2="719.79" stroke-width="0.762" /><line x1="279.30" y1="719.79" x2="284.61" y2="725.22" stroke-width="0.715" /><line x1="284.61" y1="725.22" x2="290.27" y2="730.27" stroke-width="0.747" /><line x1="290.27" y1="730.27" x2="296.27" y2="734.92" stroke-width="0.791" /><line x1="296.27" y1="734.92" x2="302.58" y2="739.14" stroke-width="0.831" /><line x1="302.58" y1="739.14" x2="309.17" y2="742.91" stroke-width="0.868" /><line x1="309.17" y1="742.91" x2="316.00" y2="746.21" stroke-width="0.900" /><line x1="316.00" y1="746.21" x2="323.05" y2="749.04" stroke-width="0.928" /><line x1="323.05" y1="749.04" x2="330.27" y2="751.37" stroke-width="0.952" /><line x1="330.27" y1="751.37" x2="337.64" y2="753.19" stroke-width="0.971" /><line x1="337.64" y1="753.19" x2="345.12" y2="754.50" stroke-width="0.985" /><line x1="345.12" y1="754.50" x2="352.66" y2="755.29" stroke-width="0.995" /><line x1="352.66" y1="755.29" x2="360.25" y2="755.55" /><line x1="265.50" y1="591.30" x2="265.50" y2="403.75" /><line x1="470.50" y1="833.50" x2="470.50" y2="646.50" /><line x1="470.50" y1="833.50" x2="360.50" y2="833.50" /><line x1="470.35" y1="646.05" x2="470.09" y2="638.54" /><line x1="470.09" y1="638.54" x2="469.32" y2="631.06" stroke-width="0.995" /><line x1="469.32" y1="631.06" x2="468.05" y2="623.65" stroke-width="0.985" /><line x1="468.05" y1="623.65" x2="466.27" y2="616.35" stroke-width="0.972" /><line x1="466.27" y1="616.35" x2="463.99" y2="609.18" stroke-width="0.953" /><line x1="463.99" y1="609.18" x2="461.23" y2="602.19" stroke-width="0.930" /><line x1="461.23" y1="602.19" x2="458.01" y2="595.40" stroke-width="0.903" /><line x1="458.01" y1="595.40" x2="454.32" y2="588.84" stroke-width="0.872" /><line x1="454.32" y1="588.84" x2="450.20" y2="582.56" stroke-width="0.836" /><line x1="450.20" y1="582.56" x2="445.66" y2="576.57" stroke-width="0.797" /><line x1="445.66" y1="576.57" x2="440.72" y2="570.90" stroke-width="0.754" /><line x1="440.72" y1="570.90" x2="435.40" y2="565.58" stroke-width="0.707" /><line x1="435.40" y1="565.58" x2="429.73" y2="560.64" stroke-width="0.754" /><line x1="429.73" y1="560.64" x2="423.74" y2="556.10" stroke-width="0.797" /><line x1="423.74" y1="556.10" x2="417.46" y2="551.98" stroke-width="0.836" /><line x1="417.46" y1="551.98" x2="410.90" y2="548.29" stroke-width="0.872" /><line x1="410.90" y1="548.29" x2="404.11" y2="545.07" stroke-width="0.903" /><line x1="404.11" y1="545.07" x2="397.12" y2="542.31" stroke-width="0.930" /><line x1="397.12" y1="542.31" x2="389.95" y2="540.03" stroke-width="0.953" /><line x1="389.95" y1="540.03" x2="382.65" y2="538.25" stroke-width="0.972" /><line x1="382.65" y1="538.25" x2="375.24" y2="536.98" stroke-width="0.985" /><line x1="375.24" y1="536.98" x2="367.76" y2="536.21" stroke-width="0.995" /><line x1="367.76" y1="536.21" x2="360.25" y2="535.95" /><line x1="360.25" y1="535.95" x2="197.30" y2="441.87" stroke-width="0.866" /><line x1="201.26" y1="547.33" x2="194.86" y2="558.46" stroke-width="0.867" /><line x1="194.86" y1="558.46" x2="189.25" y2="570.00" stroke-width="0.899" /><line x1="189.25" y1="570.00" x2="184.44" y2="581.90" stroke-width="0.927" /><line x1="184.44" y1="581.90" x2="180.45" y2="594.10" stroke-width="0.951" /><line x1="180.45" y1="594.10" x2="177.32" y2="606.55" stroke-width="0.970" /><line x1="177.32" y1="606.55" x2="175.04" y2="619.18" stroke-width="0.984" /><line x1="175.04" y1="619.18" x2="173.63" y2="631.94" stroke-width="0.994" /><line x1="173.63" y1="631.94" x2="173.10" y2="644.76" /><line x1="173.10" y1="644.76" x2="173.46" y2="657.59" /><line x1="173.46" y1="657.59" x2="174.69" y2="670.37" stroke-width="0.995" /><line x1="174.69" y1="670.37" x2="176.79" y2="683.03" stroke-width="0.986" /><line x1="176.79" y1="683.03" x2="179.76" y2="695.52" stroke-width="0.973" /><line x1="179.76" y1="695.52" x2="183.57" y2="707.77" stroke-width="0.955" /><line x1="183.57" y1="707.77" x2="188.22" y2="719.73" stroke-width="0.932" /><line x1="188.22" y1="719.73" x2="193.67" y2="731.35" stroke-width="0.905" /><line x1="193.67" y1="731.35" x2="199.91" y2="742.57" stroke-width="0.874" /><line x1="199.91" y1="742.57" x2="206.90" y2="753.33" stroke-width="0.839" /><line x1="206.90" y1="753.33" x2="214.62" y2="763.59" stroke-width="0.799" /><line x1="214.62" y1="763.59" x2="223.02" y2="773.30" stroke-width="0.756" /><line x1="223.02" y1="773.30" x2="232.06" y2="782.40" stroke-width="0.710" /><line x1="232.06" y1="782.40" x2="241.71" y2="790.87" stroke-width="0.752" /><line x1="241.71" y1="790.87" x2="251.91" y2="798.65" stroke-width="0.795" /><line x1="251.91" y1="798.65" x2="262.63" y2="805.72" stroke-width="0.835" /><line x1="262.63" y1="805.72" x2="273.80" y2="812.04" stroke-width="0.871" /><line x1="273.80" y1="812.04" x2="285.38" y2="817.57" stroke-width="0.902" /><line x1="285.38" y1="817.57" x2="297.31" y2="822.30" stroke-width="0.930" /><line x1="297.31" y1="822.30" x2="309.54" y2="826.20" stroke-width="0.953" /><line x1="309.54" y1="826.20" x2="322.01" y2="829.25" stroke-width="0.971" /><line x1="322.01" y1="829.25" x2="334.66" y2="831.44" stroke-width="0.985" /><line x1="334.66" y1="831.44" x2="347.42" y2="832.76" stroke-width="0.995" /><line x1="347.42" y1="832.76" x2="360.25" y2="833.20" /><line x1="198.50" y1="552.47" x2="198.50" y2="365.06" /><line x1="375.50" y1="792.50" x2="375.50" y2="646.50" /><line x1="375.50" y1="792.50" x2="360.50" y2="792.50" /><line x1="375.20" y1="646.05" x2="375.17" y2="645.03" /><line x1="375.17" y1="645.03" x2="375.06" y2="644.01" stroke-width="0.995" /><line x1="375.06" y1="644.01" x2="374.89" y2="643.01" stroke-width="0.985" /><line x1="374.89" y1="643.01" x2="374.65" y2="642.02" stroke-width="0.972" /><line x1="374.65" y1="642.02" x2="374.34" y2="641.04" stroke-width="0.953" /><line x1="374.34" y1="641.04" x2="373.96" y2="640.09" stroke-width="0.930" /><line x1="373.96" y1="640.09" x2="373.52" y2="639.17" stroke-width="0.903" /><line x1="373.52" y1="639.17" x2="373.02" y2="638.28" stroke-width="0.872" /><line x1="373.02" y1="638.28" x2="372.46" y2="637.43" stroke-width="0.836" /><line x1="372.46" y1="637.43" x2="371.85" y2="636.62" stroke-width="0.797" /><line x1="371.85" y1="636.62" x2="371.18" y2="635.85" stroke-width="0.754" /><line x1="371.18" y1="635.85" x2="370.45" y2="635.12" stroke-width="0.707" /><line x1="370.45" y1="635.12" x2="369.68" y2="634.45" stroke-width="0.754" /><line x1="369.68" y1="634.45" x2="368.87" y2="633.84" stroke-width="0.797" /><line x1="368.87" y1="633.84" x2="368.02" y2="633.28" stroke-width="0.836" /><line x1="368.02" y1="633.28" x2="367.13" y2="632.78" stroke-width="0.872" /><line x1="367.13" y1="632.78" x2="366.21" y2="632.34" stroke-width="0.903" /><line x1="366.21" y1="632.34" x2="365.26" y2="631.96" stroke-width="0.930" /><line x1="365.26" y1="631.96" x2="364.28" y2="631.65" stroke-width="0.953" /><line x1="364.28" y1="631.65" x2="363.29" y2="631.41" stroke-width="0.972" /><line x1="363.29" y1="631.41" x2="362.29" y2="631.24" stroke-width="0.985" /><line x1="362.29" y1="631.24" x2="361.27" y2="631.13" stroke-width="0.995" /><line x1="361.27" y1="631.13" x2="360.25" y2="631.10" /><line x1="360.25" y1="631.10" x2="197.30" y2="537.02" stroke-width="0.866" /><line x1="236.57" y1="567.72" x2="231.47" y2="576.42" stroke-width="0.863" /><line x1="231.47" y1="576.42" x2="226.98" y2="585.44" stroke-width="0.895" /><line x1="226.98" y1="585.44" x2="223.13" y2="594.76" stroke-width="0.924" /><line x1="223.13" y1="594.76" x2="219.92" y2="604.32" stroke-width="0.948" /><line x1="219.92" y1="604.32" x2="217.38" y2="614.08" stroke-width="0.968" /><line x1="217.38" y1="614.08" x2="215.52" y2="623.99" stroke-width="0.983" /><line x1="215.52" y1="623.99" x2="214.35" y2="634.00" stroke-width="0.993" /><line x1="214.35" y1="634.00" x2="213.86" y2="644.07" stroke-width="0.999" /><line x1="213.86" y1="644.07" x2="214.07" y2="654.15" /><line x1="214.07" y1="654.15" x2="214.98" y2="664.19" stroke-width="0.996" /><line x1="214.98" y1="664.19" x2="216.57" y2="674.15" stroke-width="0.987" /><line x1="216.57" y1="674.15" x2="218.85" y2="683.97" stroke-width="0.974" /><line x1="218.85" y1="683.97" x2="221.79" y2="693.61" stroke-width="0.956" /><line x1="221.79" y1="693.61" x2="225.39" y2="703.03" stroke-width="0.934" /><line x1="225.39" y1="703.03" x2="229.64" y2="712.18" stroke-width="0.907" /><line x1="229.64" y1="712.18" x2="234.50" y2="721.01" stroke-width="0.876" /><line x1="234.50" y1="721.01" x2="239.96" y2="729.49" stroke-width="0.841" /><line x1="239.96" y1="729.49" x2="245.98" y2="737.57" stroke-width="0.802" /><line x1="245.98" y1="737.57" x2="252.55" y2="745.22" stroke-width="0.759" /><line x1="252.55" y1="745.22" x2="259.63" y2="752.40" stroke-width="0.712" /><line x1="259.63" y1="752.40" x2="267.19" y2="759.07" stroke-width="0.750" /><line x1="267.19" y1="759.07" x2="275.19" y2="765.21" stroke-width="0.793" /><line x1="275.19" y1="765.21" x2="283.60" y2="770.78" stroke-width="0.833" /><line x1="283.60" y1="770.78" x2="292.36" y2="775.76" stroke-width="0.869" /><line x1="292.36" y1="775.76" x2="301.45" y2="780.12" stroke-width="0.901" /><line x1="301.45" y1="780.12" x2="310.82" y2="783.85" stroke-width="0.929" /><line x1="310.82" y1="783.85" x2="320.42" y2="786.93" stroke-width="0.952" /><line x1="320.42" y1="786.93" x2="330.21" y2="789.34" stroke-width="0.971" /><line x1="330.21" y1="789.34" x2="340.14" y2="791.06" stroke-width="0.985" /><line x1="340.14" y1="791.06" x2="350.17" y2="792.10" stroke-width="0.995" /><line x1="350.17" y1="792.10" x2="360.25" y2="792.45" /><line x1="233.50" y1="572.85" x2="233.50" y2="385.27" /><line x1="384.50" y1="689.50" x2="384.50" y2="646.50" /><line x1="384.50" y1="689.50" x2="360.50" y2="689.50" /><line x1="384.65" y1="646.05" x2="384.59" y2="644.38" /><line x1="384.59" y1="644.38" x2="384.42" y2="642.73" stroke-width="0.995" /><line x1="384.42" y1="642.73" x2="384.14" y2="641.09" stroke-width="0.985" /><line x1="384.14" y1="641.09" x2="383.75" y2="639.47" stroke-width="0.972" /><line x1="383.75" y1="639.47" x2="383.24" y2="637.88" stroke-width="0.953" /><line x1="383.24" y1="637.88" x2="382.63" y2="636.33" stroke-width="0.930" /><line x1="382.63" y1="636.33" x2="381.91" y2="634.82" stroke-width="0.903" /><line x1="381.91" y1="634.82" x2="381.10" y2="633.37" stroke-width="0.872" /><line x1="381.10" y1="633.37" x2="380.18" y2="631.98" stroke-width="0.836" /><line x1="380.18" y1="631.98" x2="379.18" y2="630.65" stroke-width="0.797" /><line x1="379.18" y1="630.65" x2="378.08" y2="629.40" stroke-width="0.754" /><line x1="378.08" y1="629.40" x2="376.90" y2="628.22" stroke-width="0.707" /><line x1="376.90" y1="628.22" x2="375.65" y2="627.12" stroke-width="0.754" /><line x1="375.65" y1="627.12" x2="374.32" y2="626.12" stroke-width="0.797" /><line x1="374.32" y1="626.12" x2="372.93" y2="625.20" stroke-width="0.836" /><line x1="372.93" y1="625.20" x2="371.48" y2="624.39" stroke-width="0.872" /><line x1="371.48" y1="624.39" x2="369.97" y2="623.67" stroke-width="0.903" /><line x1="369.97" y1="623.67" x2="368.42" y2="623.06" stroke-width="0.930" /><line x1="368.42" y1="623.06" x2="366.83" y2="622.55" stroke-width="0.953" /><line x1="366.83" y1="622.55" x2="365.21" y2="622.16" stroke-width="0.972" /><line x1="365.21" y1="622.16" x2="363.57" y2="621.88" stroke-width="0.985" /><line x1="363.57" y1="621.88" x2="361.92" y2="621.71" stroke-width="0.995" /><line x1="361.92" y1="621.71" x2="360.25" y2="621.65" /><line x1="360.25" y1="621.65" x2="197.30" y2="527.57" stroke-width="0.866" /><line x1="325.93" y1="619.33" x2="324.15" y2="621.78" stroke-width="0.810" /><line x1="324.15" y1="621.78" x2="322.54" y2="624.36" stroke-width="0.849" /><line x1="322.54" y1="624.36" x2="321.12" y2="627.04" stroke-width="0.884" /><line x1="321.12" y1="627.04" x2="319.89" y2="629.81" stroke-width="0.914" /><line x1="319.89" y1="629.81" x2="318.86" y2="632.67" stroke-width="0.940" /><line x1="318.86" y1="632.67" x2="318.03" y2="635.58" stroke-width="0.962" /><line x1="318.03" y1="635.58" x2="317.40" y2="638.55" stroke-width="0.978" /><line x1="317.40" y1="638.55" x2="316.98" y2="641.56" stroke-width="0.990" /><line x1="316.98" y1="641.56" x2="316.77" y2="644.58" stroke-width="0.998" /><line x1="316.77" y1="644.58" x2="316.78" y2="647.62" /><line x1="316.78" y1="647.62" x2="316.99" y2="650.65" stroke-width="0.997" /><line x1="316.99" y1="650.65" x2="317.42" y2="653.65" stroke-width="0.990" /><line x1="317.42" y1="653.65" x2="318.05" y2="656.62" stroke-width="0.978" /><line x1="318.05" y1="656.62" x2="318.89" y2="659.53" stroke-width="0.961" /><line x1="318.89" y1="659.53" x2="319.93" y2="662.38" stroke-width="0.939" /><line x1="319.93" y1="662.38" x2="321.17" y2="665.15" stroke-width="0.913" /><line x1="321.17" y1="665.15" x2="322.60" y2="667.83" stroke-width="0.883" /><line x1="322.60" y1="667.83" x2="324.20" y2="670.40" stroke-width="0.848" /><line x1="324.20" y1="670.40" x2="325.99" y2="672.85" stroke-width="0.809" /><line x1="325.99" y1="672.85" x2="327.94" y2="675.18" stroke-width="0.766" /><line x1="327.94" y1="675.18" x2="330.05" y2="677.36" stroke-width="0.719" /><line x1="330.05" y1="677.36" x2="332.31" y2="679.39" stroke-width="0.744" /><line x1="332.31" y1="679.39" x2="334.70" y2="681.25" stroke-width="0.788" /><line x1="334.70" y1="681.25" x2="337.21" y2="682.95" stroke-width="0.829" /><line x1="337.21" y1="682.95" x2="339.84" y2="684.47" stroke-width="0.866" /><line x1="339.84" y1="684.47" x2="342.57" y2="685.79" stroke-width="0.899" /><line x1="342.57" y1="685.79" x2="345.38" y2="686.93" stroke-width="0.927" /><line x1="345.38" y1="686.93" x2="348.27" y2="687.87" stroke-width="0.951" /><line x1="348.27" y1="687.87" x2="351.21" y2="688.60" stroke-width="0.970" /><line x1="351.21" y1="688.60" x2="354.20" y2="689.13" stroke-width="0.985" /><line x1="354.20" y1="689.13" x2="357.22" y2="689.44" stroke-width="0.995" /><line x1="357.22" y1="689.44" x2="360.25" y2="689.55" /><line x1="322.50" y1="624.30" x2="322.50" y2="436.66" /></g>
<g stroke="#ff7f00"><line x1="450.50" y1="747.50" x2="450.50" y2="646.50"  stroke-dasharray="14.2 5.7 0.9 5.7" stroke-dashoffset="9.60"/><line x1="450.50" y1="747.50" x2="360.50" y2="747.50"  stroke-dasharray="14.2 5.7 0.9 5.7" stroke-dashoffset="1.85"/><path d="M450.45 646.05A90.2 90.2 0 0 0 360.25 555.85" stroke-width="0.85" stroke-dasharray="14.2 5.7 0.9 5.7" stroke-dashoffset="2.51"/><line x1="360.25" y1="555.85" x2="197.30" y2="461.77" stroke-width="0.866"  stroke-dasharray="14.2 5.7 0.9 5.7" stroke-dashoffset="5.77"/><path d="M275.59 590.25A101.4 101.4 0 0 0 360.25 747.45" stroke-width="0.85" stroke-dasharray="14.2 5.7 0.9 5.7" stroke-dashoffset="3.91"/><line x1="272.50" y1="595.35" x2="272.50" y2="407.79"  stroke-dasharray="14.2 5.7 0.9 5.7" stroke-dashoffset="6.07"/><line x1="272.50" y1="505.15" x2="472.55" y2="389.65" stroke-width="0.866"  stroke-dasharray="14.2 5.7 0.9 5.7" stroke-dashoffset="10.85"/></g>
<g stroke="#ff9a20"><line x1="581.50" y1="509.00" x2="581.50" y2="696.00"  stroke-dasharray="14.2 5.7 0.9 5.7" stroke-dashoffset="6.35"/></g>
<g stroke="#ff0000"><line x1="132.00" y1="854.50" x2="174.00" y2="854.50" /><line x1="152.50" y1="834.00" x2="152.50" y2="875.00" /></g>
</g>
<g fill="#000080"><circle cx="342.5" cy="510.2" r="1.7"/><circle cx="265.5" cy="413.2" r="1.7"/><circle cx="198.5" cy="442.4" r="1.7"/><circle cx="233.5" cy="557.9" r="1.7"/><circle cx="322.5" cy="599.9" r="1.7"/><circle cx="272.5" cy="505.1" r="1.7"/><circle cx="538.5" cy="755.5" r="1.7"/><circle cx="450.5" cy="747.5" r="1.7"/></g>
<g stroke="#b00000" fill="none" stroke-width="1"><circle cx="272.5" cy="595.3" r="5"/><path d="M267.5 595.3h10M272.5 590.3v10"/></g>
</g>
<g>
<path d="M53.4 173L62.3 168.7V177.3z" fill="#000"/>
<g transform="translate(18 198)"><path d="M15 19.5h9M19.5 15v9" stroke="#000" stroke-width="1.3" fill="none" /></g>
<g transform="translate(58 198)"><circle cx="7.8" cy="8" r="1.95" fill="#ff0000"/><circle cx="7.8" cy="16" r="1.95" fill="#ff0000"/><circle cx="7.8" cy="24.1" r="1.95" fill="#ff0000"/><circle cx="7.8" cy="32.1" r="1.95" fill="#ff0000"/><circle cx="15.8" cy="8" r="1.95" fill="#ff0000"/><circle cx="15.8" cy="16" r="1.95" fill="#ff0000"/><circle cx="15.8" cy="24.1" r="1.95" fill="#ff0000"/><circle cx="15.8" cy="32.1" r="1.95" fill="#ff0000"/><circle cx="23.9" cy="8" r="1.95" fill="#ff0000"/><circle cx="23.9" cy="16" r="1.95" fill="#ff0000"/><circle cx="23.9" cy="24.1" r="1.95" fill="#ff0000"/><circle cx="23.9" cy="32.1" r="1.95" fill="#ff0000"/><circle cx="32" cy="8" r="1.95" fill="#ff0000"/><circle cx="32" cy="16" r="1.95" fill="#ff0000"/><circle cx="32" cy="24.1" r="1.95" fill="#ff0000"/><circle cx="32" cy="32.1" r="1.95" fill="#ff0000"/></g>
<g transform="translate(18 246)"><line x1="8" y1="19.1" x2="31.9" y2="32" stroke="#000" stroke-width="1.25" /><path d="M17.55 8.2A14.3 14.3 0 0 0 31.9 22.4" stroke="#000" stroke-width="1.25" fill="none" /><circle cx="17.55" cy="8.2" r="2.1" fill="#ff0000"/><circle cx="8" cy="19.1" r="2.1" fill="#ff0000"/><circle cx="31.9" cy="22.4" r="2.1" fill="#ff0000"/><circle cx="31.9" cy="32" r="2.1" fill="#ff0000"/></g>
<g transform="translate(58 246)"><line x1="8" y1="20.8" x2="32.6" y2="7.4" stroke="#000" stroke-width="1.25" /><path d="M17.5 32A14.5 14.5 0 0 1 32 17.5" stroke="#000" stroke-width="1.25" fill="none" /><circle cx="8" cy="20.8" r="2.1" fill="#ff0000"/><circle cx="13.95" cy="17.5" r="2.1" fill="#ff0000"/><circle cx="20" cy="14.3" r="2.1" fill="#ff0000"/><circle cx="25.9" cy="11" r="2.1" fill="#ff0000"/><circle cx="32.6" cy="7.4" r="2.1" fill="#ff0000"/><circle cx="17.5" cy="32" r="2.1" fill="#ff0000"/><circle cx="18.7" cy="26.4" r="2.1" fill="#ff0000"/><circle cx="21.6" cy="21.6" r="2.1" fill="#ff0000"/><circle cx="26.4" cy="18.7" r="2.1" fill="#ff0000"/><circle cx="32" cy="17.5" r="2.1" fill="#ff0000"/></g>
<g transform="translate(18 286)"><line x1="10.2" y1="8.3" x2="21.7" y2="21.7" stroke="#000" stroke-width="1.25" /><path d="M17.3 31.6A14.7 14.7 0 0 1 31.9 17.2" stroke="#000" stroke-width="1.25" fill="none" /><path d="M18.2 16.7Q21.9 11.5 26.7 17.2" stroke="#888" stroke-width="0.7" fill="none" /><circle cx="21.7" cy="21.7" r="2.1" fill="#ff0000"/></g>
<g transform="translate(58 286)"><circle cx="24.2" cy="16.9" r="7.85" stroke="#000" stroke-width="1.25" fill="none"/><line x1="8.2" y1="29.7" x2="17.3" y2="13.6" stroke="#000" stroke-width="1.25" /><circle cx="17.3" cy="13.6" r="2.1" fill="#ff0000"/></g>
<g transform="translate(18 326)"><line x1="7" y1="21.1" x2="31.9" y2="8.4" stroke="#000" stroke-width="1.25" /><path d="M16.9 31.8A15 15 0 0 1 31.9 16.8" stroke="#000" stroke-width="1.25" fill="none" /><circle cx="19.5" cy="14.4" r="2.1" fill="#ff0000"/><circle cx="31.4" cy="31.4" r="2.1" fill="#ff0000"/></g>
<g transform="translate(58 326)"><circle cx="20" cy="19.9" r="11.25" stroke="#000" stroke-width="1.25" fill="none"/><circle cx="20" cy="19.9" r="2.1" fill="#ff0000"/><circle cx="20" cy="8.65" r="2.1" fill="#ff0000"/><circle cx="20" cy="31.15" r="2.1" fill="#ff0000"/><circle cx="8.75" cy="19.9" r="2.1" fill="#ff0000"/><circle cx="31.25" cy="19.9" r="2.1" fill="#ff0000"/></g>
<g transform="translate(18 374)"><line x1="7.3" y1="20.7" x2="32.9" y2="7.3" stroke="#000" stroke-width="1.25" /><path d="M17.3 32.7A15.7 15.7 0 0 1 32.9 17.4" stroke="#000" stroke-width="1.25" fill="none" /><circle cx="19.9" cy="14.3" r="2.1" fill="#ff0000"/><circle cx="21.7" cy="21.7" r="2.1" fill="#ff0000"/></g>
<g transform="translate(58 374)"><rect x="6.3" y="9.4" width="27.3" height="21.2" fill="none" stroke="#000" stroke-width="1.5"/><line x1="7.7" y1="28.9" x2="32.1" y2="10.9" stroke="#999" stroke-width="0.6" /><line x1="14.1" y1="24.8" x2="25.9" y2="15.2" stroke="#555" stroke-width="0.8" /><circle cx="20" cy="19.9" r="2.1" fill="#ff0000"/></g>
<g transform="translate(18 422)"><line x1="8.9" y1="20.8" x2="32.9" y2="7.9" stroke="#000" stroke-width="1.25" /><path d="M18.2 31.8A15 15 0 0 1 32.9 17.3" stroke="#000" stroke-width="1.25" fill="none" /><circle cx="16.9" cy="16.5" r="2.1" fill="#ff0000"/><circle cx="21.2" cy="22.4" r="2.1" fill="#ff0000"/><path d="M6.5 16.2L11.5 13.6" stroke="#000" stroke-width="2.2"/><path d="M14.8 11.8L9.4 11.9L11.7 16z" fill="#000"/><path d="M23.4 31.4L24.2 28.5" stroke="#000" stroke-width="2.2"/><path d="M25 25L22 29.3L26.4 30.4z" fill="#000"/></g>
<g transform="translate(58 422)"><line x1="7.7" y1="21.1" x2="32.3" y2="7.9" stroke="#000" stroke-width="1.1" stroke-dasharray="2.5 2.5"/><circle cx="7.7" cy="21.1" r="1.2" fill="#000"/><circle cx="32.3" cy="7.9" r="1.5" fill="#000"/><circle cx="16.3" cy="16.2" r="2.1" fill="#ff0000"/><path d="M6.3 16.7L11.3 14.1" stroke="#000" stroke-width="2.2"/><path d="M14.6 12.3L9.2 12.4L11.5 16.5z" fill="#000"/></g>
<g transform="translate(18 470)"><line x1="6.1" y1="17.4" x2="33.8" y2="25.5" stroke="#000" stroke-width="1.25" /><line x1="27.1" y1="6.3" x2="20.4" y2="33.6" stroke="#000" stroke-width="1.25" /><circle cx="23.5" cy="22.6" r="2.1" fill="#ff0000"/></g>
<g transform="translate(58 470)"><line x1="8.7" y1="22" x2="20.7" y2="25.5" stroke="#000" stroke-width="1.25" /><line x1="31.4" y1="10.7" x2="28.3" y2="22.1" stroke="#000" stroke-width="1.25" /><circle cx="26.6" cy="27.6" r="2.1" fill="#ff0000"/></g>
<g transform="translate(18 566)"><path d="M16.4 6.3V24.5H34.8" stroke="#000" stroke-width="1.3" fill="none" /><circle cx="31.4" cy="8.5" r="2" fill="#ff0000"/></g>
<g transform="translate(58 566)"><path d="M25.4 11.4L6.6 30.3H33.8M25.4 11.4A26.7 26.7 0 0 1 33.8 30.3" stroke="#000" stroke-width="1.2" fill="none" /><circle cx="25.4" cy="11.4" r="2" fill="#ff0000"/></g>
<g transform="translate(18 614)"><line x1="10.6" y1="10.8" x2="29.2" y2="10.8" stroke="#000" stroke-width="1.1" stroke-dasharray="1 1.6"/><line x1="10.6" y1="10.8" x2="10.6" y2="29.4" stroke="#000" stroke-width="1.1" stroke-dasharray="1 1.6"/><circle cx="29.2" cy="10.8" r="1.5" fill="#000"/><circle cx="10.6" cy="29.4" r="1.5" fill="#000"/><circle cx="10.6" cy="10.8" r="2.7" fill="#ff0000"/></g>
<g transform="translate(58 614)"><line x1="29" y1="10.8" x2="29" y2="29.4" stroke="#000" stroke-width="1.1" stroke-dasharray="1 1.6"/><line x1="10.4" y1="29.4" x2="29" y2="29.4" stroke="#000" stroke-width="1.1" stroke-dasharray="1 1.6"/><circle cx="29" cy="10.8" r="1.5" fill="#000"/><circle cx="10.4" cy="29.4" r="1.5" fill="#000"/><circle cx="29" cy="29.4" r="2.8" fill="#ff0000"/></g>
<g transform="translate(18 662)"><path d="M7.3 25.5V14Q7.3 9.2 12.8 9.2H32.9V30.6H15.6V25.5z" stroke="#f4a0a0" stroke-width="0.8" fill="none" /><circle cx="14.7" cy="17.4" r="3.8" stroke="#f4a0a0" stroke-width="0.8" fill="none"/><path d="M27.6 16.4V25.5H19.5z" stroke="#f4a0a0" stroke-width="0.8" fill="none" /><circle cx="19.9" cy="19.9" r="2" fill="#ff0000"/></g>
<g transform="translate(18 710)"><path d="M15 19.4h9M19.5 14.9v9" stroke="#000" stroke-width="1.3" fill="none" /></g>
<g transform="translate(58 710)"><path d="M6 19.4H33.1M19.5 6V32.8" stroke="#000" stroke-width="1.3" fill="none" /><circle cx="19.5" cy="19.4" r="4.3" fill="#e4f2f2" stroke="#ff0000" stroke-width="1.1"/><path d="M15.2 19.4h8.6M19.5 15.099999999999998v8.6" stroke="#ff0000" stroke-width="1.1"/></g>
<g transform="translate(18 750)"><path d="M6 19.4H33" stroke="#000" stroke-width="1.3" fill="none" /><circle cx="19.5" cy="19.4" r="4.3" fill="#e4f2f2" stroke="#ff0000" stroke-width="1.1"/><path d="M15.2 19.4h8.6M19.5 15.099999999999998v8.6" stroke="#ff0000" stroke-width="1.1"/></g>
<g transform="translate(58 750)"><path d="M19.5 6.2V33" stroke="#000" stroke-width="1.3" fill="none" /><circle cx="19.5" cy="19.4" r="4.3" fill="#e4f2f2" stroke="#ff0000" stroke-width="1.1"/><path d="M15.2 19.4h8.6M19.5 15.099999999999998v8.6" stroke="#ff0000" stroke-width="1.1"/></g>
<g transform="translate(18 790)"><line x1="9.4" y1="11.4" x2="9.4" y2="5.8" stroke="#333" stroke-width="0.9" /><line x1="14.32" y1="12.05" x2="15.77" y2="6.64" stroke="#666" stroke-width="0.9" /><line x1="18.9" y1="13.95" x2="21.7" y2="9.1" stroke="#666" stroke-width="0.9" /><line x1="22.84" y1="16.96" x2="26.79" y2="13.01" stroke="#666" stroke-width="0.9" /><line x1="27.75" y1="25.48" x2="33.16" y2="24.03" stroke="#666" stroke-width="0.9" /><line x1="28.4" y1="30.4" x2="34.0" y2="30.4" stroke="#333" stroke-width="0.9" /><circle cx="9.4" cy="30.4" r="4.3" fill="#e4f2f2" stroke="#ff0000" stroke-width="1.1"/><path d="M5.1000000000000005 30.4h8.6M9.4 26.099999999999998v8.6" stroke="#ff0000" stroke-width="1.1"/><line x1="10.4" y1="29.9" x2="31" y2="18.4" stroke="#000" stroke-width="1.2" /></g>
<g transform="translate(18 838)"><circle cx="16.4" cy="13.5" r="4.3" fill="#e4f2f2" stroke="#ff0000" stroke-width="1.1"/><path d="M12.099999999999998 13.5h8.6M16.4 9.2v8.6" stroke="#ff0000" stroke-width="1.1"/><path d="M17.8 15.5V27.6L20.6 25L23 30.5L25.2 29.5L22.9 24.2H26.6z" fill="#f4f4f4" stroke="#777" stroke-width="0.9"/></g>
<g transform="translate(58 838)"><ellipse cx="12" cy="14.5" rx="2.7" ry="4.5" fill="none" stroke="#000" stroke-width="1.9"/><path d="M14.9 14.5H29.8" stroke="#000" stroke-width="2.3"/><path d="M24.5 14.5V19.6H26.3V17.3H27.6V19.8H29.9V14.5z" fill="#000"/><circle cx="19.5" cy="28.6" r="4.3" fill="#e4f2f2" stroke="#ff0000" stroke-width="1.1"/><path d="M15.2 28.6h8.6M19.5 24.3v8.6" stroke="#ff0000" stroke-width="1.1"/></g>
</g>
<defs>
<linearGradient id="lgb" x1="0" y1="0" x2="0" y2="1"><stop offset="0" stop-color="#5a92de"/><stop offset="1" stop-color="#93c4f6"/></linearGradient>
<linearGradient id="lgg" x1="0" y1="0" x2="0" y2="1"><stop offset="0" stop-color="#bdbbb8"/><stop offset="1" stop-color="#dcdad7"/></linearGradient>
<linearGradient id="paper" x1="0" y1="0" x2="1" y2="1"><stop offset="0" stop-color="#fdfdfd"/><stop offset="1" stop-color="#dedede"/></linearGradient>
<linearGradient id="fold" x1="0" y1="0" x2="0" y2="1"><stop offset="0" stop-color="#6ea3dd"/><stop offset="1" stop-color="#3f78bd"/></linearGradient>
<linearGradient id="flop" x1="0" y1="0" x2="0" y2="1"><stop offset="0" stop-color="#3e6cf2"/><stop offset="1" stop-color="#4f8cff"/></linearGradient>
<linearGradient id="flab" x1="0" y1="0" x2="1" y2="1"><stop offset="0" stop-color="#ffffff"/><stop offset="1" stop-color="#b9cdfb"/></linearGradient>
<linearGradient id="grn" x1="0" y1="0" x2="1" y2="1"><stop offset="0" stop-color="#93d684"/><stop offset="0.5" stop-color="#4fb258"/><stop offset="1" stop-color="#15863a"/></linearGradient>
<linearGradient id="gry" x1="0" y1="0" x2="1" y2="1"><stop offset="0" stop-color="#cfcdcb"/><stop offset="1" stop-color="#a3a19f"/></linearGradient>
<linearGradient id="pen" x1="0" y1="0" x2="1" y2="1"><stop offset="0" stop-color="#8a8a8a"/><stop offset="1" stop-color="#c8c8c8"/></linearGradient>
<linearGradient id="prn" x1="0" y1="0" x2="0" y2="1"><stop offset="0" stop-color="#e4e4e2"/><stop offset="1" stop-color="#a9a9a7"/></linearGradient>
<radialGradient id="glow"><stop offset="0" stop-color="#ffff60"/><stop offset="0.45" stop-color="#f2ee10"/><stop offset="0.8" stop-color="#e6e23a" stop-opacity="0.7"/><stop offset="1" stop-color="#e6e23a" stop-opacity="0"/></radialGradient>
</defs>
<path d="M36.4 81.3V93.2L39.2 90.7L41.8 96.4L44 95.4L41.5 89.9H45.4z" fill="#fbfbfb" stroke="#868686" stroke-width="1"/>
<rect x="90.4" y="79.2" width="18.2" height="19.8" rx="1" fill="url(#paper)" stroke="#b4b4b4" stroke-width="0.9"/><path d="M90.6 99.4h18" stroke="#a2a2a2" stroke-width="0.9"/><circle cx="105.6" cy="82.8" r="5.4" fill="url(#glow)"/>
<path d="M118.5 80.5L120 79h5l1.5 1.5h12v15h-19z" fill="#8a8a8a"/><path d="M124 79.5h14.5v9h-14.5z" fill="#ececec" stroke="#bcbcbc" stroke-width="0.6"/><path d="M123 81.5h14v7h-14z" fill="#dedede"/><path d="M123.1 87.3L141.6 86.7L139 97H120.3z" fill="url(#fold)" stroke="#3a6eb0" stroke-width="0.6"/>
<g transform="translate(157.3 79)"><rect x="0.4" y="0.4" width="18" height="19.2" rx="3" fill="url(#flop)" stroke="#34349c" stroke-width="0.9"/><rect x="2.9" y="1.2" width="13.2" height="8.6" fill="url(#flab)"/><rect x="4.8" y="12.2" width="9.6" height="7" fill="#d6d6dc"/><rect x="6.2" y="14" width="1.7" height="3.4" fill="#3b55d0"/></g>
<g transform="translate(187.4 79)"><rect x="0.4" y="0.4" width="18" height="19.2" rx="3" fill="url(#flop)" stroke="#34349c" stroke-width="0.9"/><rect x="2.9" y="1.2" width="13.2" height="8.6" fill="url(#flab)"/><rect x="4.8" y="12.2" width="9.6" height="7" fill="#d6d6dc"/><rect x="6.2" y="14" width="1.7" height="3.4" fill="#3b55d0"/></g>
<path d="M196 92L197.3 88.3L204.3 79.6L207.3 82L200 90.5z" fill="#f6a81c" stroke="#c87810" stroke-width="0.5"/><path d="M196 92L197.3 88.3L200 90.5z" fill="#f0d8b0"/><path d="M204.3 79.6L205.4 78.3L208.4 80.7L207.3 82z" fill="#e46a50"/><path d="M198.2 88.2L204.9 80.2" stroke="#ffd868" stroke-width="1"/>
<path d="M228 79h12.5v9h-12.5z" fill="#f2f2f2" stroke="#c4c4c4" stroke-width="0.7"/><path d="M225 87.5h17.5l2 2.5v6.5a1 1 0 0 1 -1 1h-19.500a1 1 0 0 1 -1 -1V90z" fill="url(#prn)" stroke="#9a9a98" stroke-width="0.6"/><path d="M226 93.300h16.500" stroke="#f4f4f4" stroke-width="1.6"/><path d="M233.800 87.800L240.700 92.600" stroke="#8c8c8c" stroke-width="2.2" stroke-linecap="round"/><circle cx="230.700" cy="84.800" r="4.500" fill="#b8d4f2" stroke="#9aa8b8" stroke-width="1.300"/>
<path d="M269.1 82.4L273.9 86.2C275.5 83 279 79.6 283.1 79.6C288 79.6 290.9 83.500 290.7 88.2C290.5 92.500 287.500 96.500 278.2 97.400C283 96.500 286.600 93.500 286.800 89.800C287 86.500 285 84.900 282.500 84.900C280 84.900 277 87 275.500 89.500L279 93.500H269.100z" fill="url(#grn)" stroke="#2b8f40" stroke-width="0.7" stroke-linejoin="round"/>
<g transform="translate(590 0) scale(-1 1)"><path d="M269.1 82.4L273.9 86.2C275.5 83 279 79.6 283.1 79.6C288 79.6 290.9 83.500 290.7 88.2C290.5 92.500 287.500 96.500 278.2 97.400C283 96.500 286.600 93.500 286.800 89.800C287 86.500 285 84.900 282.500 84.900C280 84.900 277 87 275.500 89.500L279 93.500H269.100z" fill="url(#gry)" stroke="#9c9a98" stroke-width="0.7" stroke-linejoin="round"/></g>
<path d="M339.500 97.600h16" stroke="#dcdad6" stroke-width="1.200"/><path d="M340.800 92.200L350.800 80.400L355.800 84.600L345.800 96.400z" fill="url(#pen)"/><path d="M339.600 93.600L340.800 92.200L345.800 96.400L344.600 97.600z" fill="#f8f8f8" stroke="#c8c8c8" stroke-width="0.5"/>
<g fill="none" stroke="#a2a2a2" stroke-width="1.700"><ellipse cx="378.300" cy="91" rx="4.300" ry="2.500" transform="rotate(-28 378.300 91)"/><ellipse cx="386.600" cy="94.600" rx="2.300" ry="4.200" transform="rotate(-12 386.600 94.600)"/></g><path d="M384.600 77.400L386 77.800L386.100 91L383.300 90z" fill="#b4b4b4"/><path d="M394.400 82.800L394.700 84.200L383.400 91.200L382 89.400z" fill="#c2c2c2"/><path d="M373.800 97.500h4.400M376 95.300v4.400" stroke="#222" stroke-width="0.900"/>
<path d="M403.500 77.600h14.600v18.600h-14.600z" fill="#f8f8f8" stroke="#c6c6c6" stroke-width="0.800"/><path d="M405.500 82h5M405.500 84.500h4M405.500 87h4M405.500 89.500h4" stroke="#d4d4d4" stroke-width="0.700"/><path d="M409.400 81.800h14q2 0 2 2v11.500l-4.500 4.500h-11.500z" fill="url(#paper)" stroke="#bdbdbd" stroke-width="0.800"/><path d="M412.500 86h10v7h-10z" fill="#e4e4e4"/><path d="M420.900 99.800v-4.500h4.500z" fill="#c4c4c4"/><path d="M404 96.600h4.400M406.200 94.400v4.400" stroke="#333" stroke-width="0.900"/>
<rect x="433.900" y="78.800" width="20" height="20.600" rx="1.800" fill="#bb842e" stroke="#96651c" stroke-width="0.700"/><rect x="436.700" y="81.300" width="14.700" height="16.800" fill="#ececec"/><path d="M438.800 85h10M438.800 87.500h10M438.800 90h10M438.800 92.500h8" stroke="#d2d2d2" stroke-width="1"/><path d="M451.400 98.100h-4l4 -4z" fill="#8e8e8e"/><rect x="439.600" y="77.300" width="8.400" height="4.200" rx="1" fill="#a9a79c" stroke="#7e7c72" stroke-width="0.600"/>
<path d="M482.200 96.800h15.800" stroke="#f03a3a" stroke-width="1.100"/><path d="M483.600 95.300L485 90.800L493.800 81.600L497.600 85L488.400 94.200z" fill="#dc3424" stroke="#a81c12" stroke-width="0.500"/><path d="M483.600 95.300L485 90.800L488.400 94.200z" fill="#f2d2a4"/><path d="M483.600 95.300L484.200 93.500L485.600 94.800z" fill="#333"/><path d="M486.600 90.600L494.600 82.600" stroke="#f48672" stroke-width="1.200"/>
<rect x="509" y="81.300" width="22" height="16" rx="0.800" fill="#00007c" stroke="#20206a" stroke-width="0.500"/><path d="M512 95.100L528.400 83.900V95.100z" fill="none" stroke="#fff" stroke-width="0.900" stroke-dasharray="2 1.400"/>
<circle cx="550" cy="88.700" r="9.900" fill="none" stroke="#0a0a0a" stroke-width="1.300"/><path d="M539.500 99.600L560.700 78.300" stroke="#3c3cff" stroke-width="1"/>
<g fill="#787878"><rect x="577.2" y="78.8" width="2" height="2"/><rect x="577.2" y="84.8" width="2" height="2"/><rect x="577.2" y="90.8" width="2" height="2"/><rect x="577.2" y="96.8" width="2" height="2"/><rect x="583.1" y="78.8" width="2" height="2"/><rect x="583.1" y="84.8" width="2" height="2"/><rect x="583.1" y="90.8" width="2" height="2"/><rect x="583.1" y="96.8" width="2" height="2"/><rect x="589" y="78.8" width="2" height="2"/><rect x="589" y="84.8" width="2" height="2"/><rect x="589" y="90.8" width="2" height="2"/><rect x="589" y="96.8" width="2" height="2"/><rect x="594.9" y="78.8" width="2" height="2"/><rect x="594.9" y="84.8" width="2" height="2"/><rect x="594.9" y="90.8" width="2" height="2"/><rect x="594.9" y="96.8" width="2" height="2"/></g>
<path d="M626.8000000000001 91.6L633.4000000000001 97.6" stroke="#4e4e4e" stroke-width="3.4" stroke-linecap="round"/><path d="M630.5 94.6L633.4000000000001 97.39999999999999" stroke="#8a8a8a" stroke-width="1.4" stroke-linecap="round"/><circle cx="621.2" cy="85.8" r="8.7" fill="#dddcd4" stroke="#bfbeb6" stroke-width="0.8"/><circle cx="621.2" cy="85.8" r="6.799999999999999" fill="url(#lgb)"/><path d="M617 85.800h8.400M621.200 81.600v8.400" stroke="#fff" stroke-width="2.100" fill="none"/>
<path d="M656.8000000000001 91.6L663.4000000000001 97.6" stroke="#4e4e4e" stroke-width="3.4" stroke-linecap="round"/><path d="M660.5 94.6L663.4000000000001 97.39999999999999" stroke="#8a8a8a" stroke-width="1.4" stroke-linecap="round"/><circle cx="651.2" cy="85.8" r="8.7" fill="#dddcd4" stroke="#bfbeb6" stroke-width="0.8"/><circle cx="651.2" cy="85.8" r="6.799999999999999" fill="url(#lgb)"/><path d="M647 85.800h8.400" stroke="#fff" stroke-width="2.100" fill="none"/>
<path d="M686.8000000000001 91.6L693.4000000000001 97.6" stroke="#4e4e4e" stroke-width="3.4" stroke-linecap="round"/><path d="M690.5 94.6L693.4000000000001 97.39999999999999" stroke="#8a8a8a" stroke-width="1.4" stroke-linecap="round"/><circle cx="681.2" cy="85.8" r="8.7" fill="#dddcd4" stroke="#bfbeb6" stroke-width="0.8"/><circle cx="681.2" cy="85.8" r="6.799999999999999" fill="url(#lgb)"/><path d="M677.200 84.300v-2.500h2.500M682.700 81.800h2.500v2.500M685.200 87.300v2.500h-2.500M679.700 89.800h-2.500v-2.500" stroke="#fff" stroke-width="1.500" fill="none"/><circle cx="681.200" cy="85.800" r="2" fill="#4f86d8"/>
<path d="M716.8000000000001 91.6L723.4000000000001 97.6" stroke="#aaa7a3" stroke-width="3.4" stroke-linecap="round"/><path d="M720.5 94.6L723.4000000000001 97.39999999999999" stroke="#c2bfbb" stroke-width="1.4" stroke-linecap="round"/><circle cx="711.2" cy="85.8" r="8.7" fill="#e3e1dd" stroke="#d2d0cc" stroke-width="0.8"/><circle cx="711.2" cy="85.8" r="6.799999999999999" fill="url(#lgg)"/><path d="M707.200 84.300v-2.500h2.500M712.700 81.800h2.500v2.500M715.200 87.300v2.500h-2.500M709.700 89.800h-2.500v-2.500" stroke="#aeaca8" stroke-width="2" fill="none"/>
<path d="M746.8000000000001 91.6L753.4000000000001 97.6" stroke="#4e4e4e" stroke-width="3.4" stroke-linecap="round"/><path d="M750.5 94.6L753.4000000000001 97.39999999999999" stroke="#8a8a8a" stroke-width="1.4" stroke-linecap="round"/><circle cx="741.2" cy="85.8" r="8.7" fill="#dddcd4" stroke="#bfbeb6" stroke-width="0.8"/><circle cx="741.2" cy="85.8" r="6.799999999999999" fill="url(#lgb)"/><path d="M736.600 85.800L740.800 82.200V84.600H746V87H740.800V89.400z" fill="#fff"/>
<rect x="762.400" y="77.300" width="20.200" height="13.200" fill="#fff" stroke="#6f92dc" stroke-width="0.900"/>
<path d="M778.8000000000001 94.0L785.4000000000001 100.0" stroke="#4e4e4e" stroke-width="3.4" stroke-linecap="round"/><path d="M782.5 97.0L785.4000000000001 99.8" stroke="#8a8a8a" stroke-width="1.4" stroke-linecap="round"/><circle cx="773.2" cy="88.2" r="7.6" fill="#dddcd4" stroke="#bfbeb6" stroke-width="0.8"/><circle cx="773.2" cy="88.2" r="5.699999999999999" fill="url(#lgb)"/><path d="M767.200 88.200h12" stroke="#6a9ce4" stroke-width="0.800"/>
<path d="M807.5 92.5L814.1 98.5" stroke="#4e4e4e" stroke-width="3.4" stroke-linecap="round"/><path d="M811.1999999999999 95.5L814.1 98.3" stroke="#8a8a8a" stroke-width="1.4" stroke-linecap="round"/><circle cx="801.9" cy="86.7" r="8.3" fill="#dddcd4" stroke="#bfbeb6" stroke-width="0.8"/><circle cx="801.9" cy="86.7" r="6.4" fill="url(#lgb)"/><path d="M792.300 86.700h19.400M801.900 77.100v19.400" stroke="#ddeafc" stroke-width="1.800"/><path d="M792.000 86.700l3.300-2.800v5.600zM811.900 86.700l-3.300-2.800v5.600zM801.900 76.800l-2.800 3.300h5.600zM801.900 96.600l-2.800-3.300h5.600z" fill="#b8d4f8"/>
<path d="M47 119.800V131" stroke="#000" stroke-width="1.100"/><circle cx="47" cy="132.200" r="1.500" fill="#f00"/>
<path d="M82 131.500L97.750 121" stroke="#000" stroke-width="1.100"/><circle cx="82" cy="131.500" r="1.600" fill="#f00"/><circle cx="97.750" cy="121" r="1.600" fill="#f00"/>
<path d="M112.500 131.600L129 121.200" stroke="#000" stroke-width="1.100"/><path d="M110.200 133.100L115.500 131.800L113.300 128.300z" fill="#000"/><path d="M131.200 119.700L125.900 121L128.100 124.500z" fill="#000"/><circle cx="120.600" cy="126.400" r="1.600" fill="#f00"/>
<path d="M142.300 131.500L158 121.200" stroke="#000" stroke-width="1.100"/><path d="M160.400 119.700L155.100 121L157.300 124.500z" fill="#000"/><circle cx="142.300" cy="131.500" r="1.600" fill="#f00"/>
<path d="M472 125.200h8.400l-4.200 4.600z" fill="#3c3c3c"/>
<circle cx="122.100" cy="159.600" r="5.400" fill="#fbfbfb" stroke="#22357c" stroke-width="2.100"/><path d="M118 160.500h4.500M121.500 156v4" stroke="#d8a0a0" stroke-width="0.600"/><path d="M122.300 160L126.600 164.600" stroke="#f2b214" stroke-width="2" stroke-linecap="round"/><circle cx="127.300" cy="165.400" r="1.100" fill="#e06868"/>
<path d="M342 156.800Q346 160.500 352.600 165.600M351.800 156.200Q347.500 160.500 341.600 165.800" stroke="#111" stroke-width="2.100" fill="none" stroke-linecap="round"/>
<path d="M627.500 211L631.500 206.500L635.500 211z" fill="#4a4a4a"/><path d="M627.500 871L631.500 875.500L635.500 871z" fill="#4a4a4a"/>
<path d="M136.500 884.500L132 888.500L136.500 892.500z" fill="#4a4a4a"/><path d="M561.500 884.500L566 888.500L561.500 892.500z" fill="#4a4a4a"/>
<path d="M627 912.500L631 908L635 912.500z" fill="#4a4a4a"/><path d="M627 945.500L631 950L635 945.500z" fill="#4a4a4a"/>
<rect x="618.500" y="963.500" width="14" height="10" fill="#fff" stroke="#222" stroke-width="1"/><rect x="618" y="963" width="15" height="3" fill="#222"/>
<g transform="translate(668.4 174.6) scale(1.0)"><path fill-rule="evenodd" d="M-7.300 0.500Q-3.600 -6.600 1 -6Q5.300 -5.400 7.300 -0.300Q3.700 5.700 -0.500 5.500Q-4.700 5.300 -7.300 0.500zM-5 0.700Q-2.500 -2.300 0.500 -2.400Q3.400 -2.300 5.300 0.100Q3 3.100 0 3.100Q-3 3 -5 0.700z" fill="#000"/><circle cx="0.200" cy="0.300" r="2.900" fill="#000"/><circle cx="-0.800" cy="-0.800" r="0.850" fill="#fff" opacity="0.550"/></g>
<g transform="translate(717.4 174.6) scale(1.0)"><path fill-rule="evenodd" d="M-7.300 0.500Q-3.600 -6.600 1 -6Q5.300 -5.400 7.300 -0.300Q3.700 5.700 -0.500 5.500Q-4.700 5.300 -7.300 0.500zM-5 0.700Q-2.500 -2.300 0.500 -2.400Q3.400 -2.300 5.300 0.100Q3 3.100 0 3.100Q-3 3 -5 0.700z" fill="#aaa"/><circle cx="0.200" cy="0.300" r="2.900" fill="#aaa"/><circle cx="-0.800" cy="-0.800" r="0.850" fill="#fff" opacity="0.550"/></g>
<path d="M760.300 174.900h11.500M766 169.300v11.300" stroke="#e60000" stroke-width="2.500"/>
<path d="M809 175h12" stroke="#e60000" stroke-width="2.700"/>
<path d="M857 181.300L858.500 177.700L867.800 168.600L870.400 171.200L861 180z" fill="#eca628" stroke="#a86c14" stroke-width="0.500"/><path d="M857 181.300L858.500 177.700L861 180z" fill="#6a4a20"/><path d="M867.800 168.600L869 167.400L871.600 170L870.400 171.200z" fill="#e03a3a"/>
<g transform="translate(655.9 196.0) scale(1.0)"><path fill-rule="evenodd" d="M-7.300 0.500Q-3.600 -6.600 1 -6Q5.300 -5.400 7.300 -0.300Q3.700 5.700 -0.500 5.500Q-4.700 5.300 -7.300 0.500zM-5 0.700Q-2.500 -2.300 0.500 -2.400Q3.400 -2.300 5.300 0.100Q3 3.100 0 3.100Q-3 3 -5 0.700z" fill="#000"/><circle cx="0.200" cy="0.300" r="2.900" fill="#000"/><circle cx="-0.800" cy="-0.800" r="0.850" fill="#fff" opacity="0.550"/></g>
<g transform="translate(668 189.5)" opacity="1"><path d="M1.900 6V3.600A3.100 3.400 0 0 1 8.100 3.600V6" fill="none" stroke="#bcbcbc" stroke-width="1.300"/><rect x="0" y="5.800" width="9.800" height="6.800" fill="#a4a4a4"/></g>
<g transform="translate(655.9 213.0) scale(1.0)"><path fill-rule="evenodd" d="M-7.300 0.500Q-3.600 -6.600 1 -6Q5.300 -5.400 7.300 -0.300Q3.700 5.700 -0.500 5.500Q-4.700 5.300 -7.300 0.500zM-5 0.700Q-2.500 -2.300 0.500 -2.400Q3.400 -2.300 5.300 0.100Q3 3.100 0 3.100Q-3 3 -5 0.700z" fill="#000"/><circle cx="0.200" cy="0.300" r="2.900" fill="#000"/><circle cx="-0.800" cy="-0.800" r="0.850" fill="#fff" opacity="0.550"/></g>
<g transform="translate(668 206.5)" opacity="1"><path d="M1.900 6V3.600A3.100 3.400 0 0 1 8.100 3.600V6" fill="none" stroke="#bcbcbc" stroke-width="1.300"/><rect x="0" y="5.800" width="9.800" height="6.800" fill="#a4a4a4"/></g>
<g transform="translate(655.9 230.0) scale(1.0)"><path fill-rule="evenodd" d="M-7.300 0.500Q-3.600 -6.600 1 -6Q5.300 -5.400 7.300 -0.300Q3.700 5.700 -0.500 5.500Q-4.700 5.300 -7.300 0.500zM-5 0.700Q-2.500 -2.300 0.500 -2.400Q3.400 -2.300 5.300 0.100Q3 3.100 0 3.100Q-3 3 -5 0.700z" fill="#0b2a45"/><circle cx="0.200" cy="0.300" r="2.900" fill="#0b2a45"/><circle cx="-0.800" cy="-0.800" r="0.850" fill="#6aa6d4" opacity="0.550"/></g>
<g transform="translate(668 223.5)" opacity="1"><path d="M1.900 6V3.600A3.100 3.400 0 0 1 8.100 3.600V6" fill="none" stroke="#86b0d0" stroke-width="1.300"/><rect x="0" y="5.800" width="9.800" height="6.800" fill="#7d9cb6"/></g>
<g transform="translate(655.9 247.0) scale(1.0)"><path fill-rule="evenodd" d="M-7.300 0.500Q-3.600 -6.600 1 -6Q5.300 -5.400 7.300 -0.300Q3.700 5.700 -0.500 5.500Q-4.700 5.300 -7.300 0.500zM-5 0.700Q-2.500 -2.300 0.500 -2.400Q3.400 -2.300 5.300 0.100Q3 3.100 0 3.100Q-3 3 -5 0.700z" fill="#000"/><circle cx="0.200" cy="0.300" r="2.900" fill="#000"/><circle cx="-0.800" cy="-0.800" r="0.850" fill="#fff" opacity="0.550"/></g>
<g transform="translate(668 240.5)" opacity="1"><path d="M1.900 6V3.600A3.100 3.400 0 0 1 8.100 3.600V6" fill="none" stroke="#bcbcbc" stroke-width="1.300"/><rect x="0" y="5.800" width="9.800" height="6.800" fill="#a4a4a4"/></g>
<g transform="translate(655.9 264.0) scale(1.0)"><path fill-rule="evenodd" d="M-7.300 0.500Q-3.600 -6.600 1 -6Q5.300 -5.400 7.300 -0.300Q3.700 5.700 -0.500 5.500Q-4.700 5.300 -7.300 0.500zM-5 0.700Q-2.500 -2.300 0.500 -2.400Q3.400 -2.300 5.300 0.100Q3 3.100 0 3.100Q-3 3 -5 0.700z" fill="#000"/><circle cx="0.200" cy="0.300" r="2.900" fill="#000"/><circle cx="-0.800" cy="-0.800" r="0.850" fill="#fff" opacity="0.550"/></g>
<g transform="translate(668 257.5)" opacity="1"><path d="M1.900 6V3.600A3.100 3.400 0 0 1 8.100 3.600V6" fill="none" stroke="#bcbcbc" stroke-width="1.300"/><rect x="0" y="5.800" width="9.800" height="6.800" fill="#a4a4a4"/></g>
<g transform="translate(655.9 281.0) scale(1.0)"><path fill-rule="evenodd" d="M-7.300 0.500Q-3.600 -6.600 1 -6Q5.300 -5.400 7.300 -0.300Q3.700 5.700 -0.500 5.500Q-4.700 5.300 -7.300 0.500zM-5 0.700Q-2.500 -2.300 0.500 -2.400Q3.400 -2.300 5.300 0.100Q3 3.100 0 3.100Q-3 3 -5 0.700z" fill="#000"/><circle cx="0.200" cy="0.300" r="2.900" fill="#000"/><circle cx="-0.800" cy="-0.800" r="0.850" fill="#fff" opacity="0.550"/></g>
<g transform="translate(668 274.5)" opacity="1"><path d="M1.900 6V3.600A3.100 3.400 0 0 1 8.100 3.600V6" fill="none" stroke="#bcbcbc" stroke-width="1.300"/><rect x="0" y="5.800" width="9.800" height="6.800" fill="#a4a4a4"/></g>
<g transform="translate(862 149)" fill="none" stroke="#65625f" stroke-width="1"><rect x="4.500" y="2.500" width="4" height="4" rx="0.8"/><rect x="2.500" y="4.500" width="4" height="4" rx="0.8" fill="#f4f2ef"/></g>
<g transform="translate(876 149)"><path d="M2.900 2.900l5.200 5.200M8.100 2.900l-5.200 5.200" stroke="#55524f" stroke-width="1.800"/></g>
<g transform="translate(862 644)" fill="none" stroke="#65625f" stroke-width="1"><rect x="4.500" y="2.500" width="4" height="4" rx="0.8"/><rect x="2.500" y="4.500" width="4" height="4" rx="0.8" fill="#f4f2ef"/></g>
<g transform="translate(876 644)"><path d="M2.900 2.900l5.200 5.200M8.100 2.900l-5.200 5.200" stroke="#55524f" stroke-width="1.800"/></g>
<path d="M863.500 680h9l-4.500 4.800z" fill="#3c3c3c"/>
<path d="M852.500 739.5h7l-3.500 3.800z" fill="#d4d0cc"/>
<path d="M852.500 766.5h7l-3.500 3.800z" fill="#d4d0cc"/>
<path d="M852.500 793.5h7l-3.500 3.800z" fill="#d4d0cc"/>
<path d="M852.500 820.5h7l-3.500 3.800z" fill="#d4d0cc"/>
<path d="M762 797.500h15.500" stroke="#8e8e8e" stroke-width="1"/>
<path d="M438.500 1003.500V997.500Q438.500 989.500 447 989.500Q455.500 989.500 455.500 997.500V1010.500Q455.500 1018 447 1018Q438.500 1018 438.500 1010.500z" fill="#fbfbfb" stroke="#3c3c3c" stroke-width="1"/><path d="M438.500 1002.500h17M447 989.500V993" stroke="#3c3c3c" stroke-width="1"/><rect x="445.300" y="992.500" width="3.400" height="6.500" rx="1.700" fill="#fff" stroke="#3c3c3c" stroke-width="1"/>
<path d="M836 32.500h8" stroke="#fff" stroke-width="1.300"/><rect x="870.500" y="26.500" width="7" height="7" fill="none" stroke="#fff" stroke-width="1.300"/><path d="M904.300 26.300l7.400 7.400M911.700 26.300l-7.400 7.400" stroke="#fff" stroke-width="1.300"/>
<rect x="896.500" y="161.5" width="21" height="21" rx="2" fill="#fff" stroke="#9c9c9c" stroke-width="1"/><rect x="897.500" y="162" width="19.500" height="3.200" fill="#000"/><rect x="897.600" y="162.2" width="2.200" height="2.400" fill="#fff"/>
<path d="M902 171.8L909 168.3V175.8L902 178.8z" fill="#8a8a8a"/><path d="M903.3 172.1L910.3 168.6V176.1L903.3 179.1z" fill="#b4b4b4"/><path d="M904.7 172.4L911.7 168.9V176.4L904.7 179.4z" fill="#fbf4f4" stroke="#a8a8a8" stroke-width="0.4"/><path d="M906 178.3L911.2 170.5V176z" fill="#f29a9a"/>
<rect x="896.500" y="191.5" width="21" height="21" rx="2" fill="#fff" stroke="#9c9c9c" stroke-width="1"/><rect x="897.500" y="192" width="19.500" height="3.200" fill="#000"/><rect x="897.600" y="192.2" width="2.200" height="2.400" fill="#fff"/>
<rect x="902" y="199.500" width="8" height="5.500" fill="#f2eac0" stroke="#cfc69a" stroke-width="0.700"/><circle cx="908.600" cy="204.500" r="3" fill="#f2eac0" stroke="#c4bb8c" stroke-width="0.800"/>
<rect x="896.500" y="228.5" width="21" height="21" rx="2" fill="#fff" stroke="#9c9c9c" stroke-width="1"/><rect x="897.500" y="229" width="19.500" height="3.200" fill="#000"/><rect x="897.600" y="229.2" width="2.200" height="2.400" fill="#fff"/>
<rect x="899" y="234.8" width="3.300" height="2.300" fill="#000"/><rect x="904.300" y="234.5" width="10.600" height="2.900" fill="#dcdcdc" stroke="#9a9a9a" stroke-width="0.500"/>
<rect x="899" y="239.4" width="3.300" height="2.300" fill="#000"/><rect x="904.300" y="239.1" width="10.600" height="2.900" fill="#dcdcdc" stroke="#9a9a9a" stroke-width="0.500"/>
<rect x="899" y="244" width="3.300" height="2.300" fill="#000"/><rect x="904.300" y="243.7" width="10.600" height="2.900" fill="#dcdcdc" stroke="#9a9a9a" stroke-width="0.500"/>
<rect x="896.500" y="265.5" width="21" height="21" rx="2" fill="#fff" stroke="#9c9c9c" stroke-width="1"/><rect x="897.500" y="266" width="19.500" height="3.200" fill="#000"/><rect x="897.600" y="266.2" width="2.200" height="2.400" fill="#fff"/>
<path d="M899.500 271.500h9M899.500 274h8.500M899.500 276.500h10.500M899.500 279h11" stroke="#b0b0b0" stroke-width="0.800"/><rect x="897.500" y="282" width="19.500" height="3.500" fill="#ececec" stroke="#9c9c9c" stroke-width="0.500"/><path d="M903.500 284h11" stroke="#888" stroke-width="1"/>
<text x="24.5" y="63.8" textLength="18.6" lengthAdjust="spacingAndGlyphs" >File</text><rect x="24.5" y="66" width="7.1" height="1" fill="#1a1a1a"/>
<text x="59.0" y="63.8" textLength="21.0" lengthAdjust="spacingAndGlyphs" >Edit</text><rect x="59.0" y="66" width="8.1" height="1" fill="#1a1a1a"/>
<text x="95.5" y="63.8" textLength="25.9" lengthAdjust="spacingAndGlyphs" >View</text><rect x="95.5" y="66" width="8.0" height="1" fill="#1a1a1a"/>
<text x="137.6" y="63.8" textLength="33.4" lengthAdjust="spacingAndGlyphs" >Select</text><rect x="137.6" y="66" width="8.0" height="1" fill="#1a1a1a"/>
<text x="186.8" y="63.8" textLength="29.8" lengthAdjust="spacingAndGlyphs" >Draw</text><rect x="186.8" y="66" width="9.2" height="1" fill="#1a1a1a"/>
<text x="231.7" y="63.8" textLength="59.7" lengthAdjust="spacingAndGlyphs" >Dimension</text><rect x="240.8" y="66" width="2.8" height="1" fill="#1a1a1a"/>
<text x="306.7" y="63.8" textLength="38.6" lengthAdjust="spacingAndGlyphs" >Modify</text><rect x="306.7" y="66" width="10.9" height="1" fill="#1a1a1a"/>
<text x="360.2" y="63.8" textLength="27.6" lengthAdjust="spacingAndGlyphs" >Snap</text><rect x="360.2" y="66" width="7.9" height="1" fill="#1a1a1a"/>
<text x="403.1" y="63.8" textLength="22.1" lengthAdjust="spacingAndGlyphs" >Info</text><rect x="403.1" y="66" width="3.7" height="1" fill="#1a1a1a"/>
<text x="440.5" y="63.8" textLength="29.5" lengthAdjust="spacingAndGlyphs" >Layer</text><rect x="440.5" y="66" width="6.6" height="1" fill="#1a1a1a"/>
<text x="485.8" y="63.8" textLength="29.9" lengthAdjust="spacingAndGlyphs" >Block</text><rect x="485.8" y="66" width="8.2" height="1" fill="#1a1a1a"/>
<text x="531.0" y="63.8" textLength="45.7" lengthAdjust="spacingAndGlyphs" >Window</text><rect x="531.0" y="66" width="12.1" height="1" fill="#1a1a1a"/>
<text x="592.5" y="63.8" textLength="24.4" lengthAdjust="spacingAndGlyphs" >Misc</text><rect x="592.5" y="66" width="9.9" height="1" fill="#1a1a1a"/>
<text x="632.6" y="63.8" textLength="25.6" lengthAdjust="spacingAndGlyphs" >Help</text><rect x="632.6" y="66" width="9.0" height="1" fill="#1a1a1a"/>
<text x="182.0" y="131.0" textLength="42.0" lengthAdjust="spacingAndGlyphs" >Length:</text><rect x="182.0" y="133" width="7.0" height="1" fill="#1a1a1a"/>
<text x="237.2" y="131.0" >90</text>
<text x="318.2" y="131.0" textLength="91.6" lengthAdjust="spacingAndGlyphs" >Reference Point:</text><rect x="318.2" y="133" width="8.9" height="1" fill="#1a1a1a"/>
<text x="425.0" y="131.0" textLength="30.0" lengthAdjust="spacingAndGlyphs" >Start</text>
<text x="177.8" y="165.5" textLength="113.2" lengthAdjust="spacingAndGlyphs" >* piramide su xz.dxf</text>
<text x="591.0" y="893.0" textLength="46.5" lengthAdjust="spacingAndGlyphs" >10 &lt; 100</text>
<text x="107.5" y="912.5" textLength="57.9" lengthAdjust="spacingAndGlyphs" style="color:#1414c8;font-style:italic;" >Command:</text>
<text x="169.3" y="912.5" textLength="28.7" lengthAdjust="spacingAndGlyphs" style="color:#1414c8;" >point</text>
<text x="107.5" y="929.3" textLength="57.9" lengthAdjust="spacingAndGlyphs" style="color:#1414c8;font-style:italic;" >Command:</text>
<text x="169.3" y="929.3" textLength="51.7" lengthAdjust="spacingAndGlyphs" style="color:#1414c8;" >linemenu</text>
<text x="107.5" y="946.1" textLength="57.9" lengthAdjust="spacingAndGlyphs" style="color:#1414c8;font-style:italic;" >Command:</text>
<text x="169.3" y="946.1" textLength="51.0" lengthAdjust="spacingAndGlyphs" style="color:#1414c8;" >lineangle</text>
<text x="103.0" y="973.8" textLength="48.0" lengthAdjust="spacingAndGlyphs" >Position:</text>
<text x="16.8" y="999.8" textLength="97.0" lengthAdjust="spacingAndGlyphs" >205.7902,76.1469</text>
<text x="16.8" y="1020.3" textLength="112.3" lengthAdjust="spacingAndGlyphs" >@147.9614,-48.2006</text>
<text x="169.3" y="999.8" textLength="76.3" lengthAdjust="spacingAndGlyphs" >219.4264&lt;20°</text>
<text x="169.3" y="1020.3" textLength="94.3" lengthAdjust="spacingAndGlyphs" >@155.6145&lt;342°</text>
<text x="335.5" y="1010.0" textLength="87.9" lengthAdjust="spacingAndGlyphs" >Specify position</text>
<text x="471.0" y="1010.0" textLength="37.1" lengthAdjust="spacingAndGlyphs" >Cancel</text>
<text x="581.3" y="1010.0" textLength="113.2" lengthAdjust="spacingAndGlyphs" >No entities selected.</text>
<text x="648.4" y="158.6" textLength="52.6" lengthAdjust="spacingAndGlyphs" >Layer List</text>
<text x="686.2" y="201.2" textLength="7.2" lengthAdjust="spacingAndGlyphs" >0</text>
<text x="686.2" y="218.2" textLength="14.4" lengthAdjust="spacingAndGlyphs" >3h</text>
<text x="686.2" y="235.2" textLength="42.4" lengthAdjust="spacingAndGlyphs" style="color:#ffffff;" >3h-tratt</text>
<text x="686.2" y="252.2" textLength="14.4" lengthAdjust="spacingAndGlyphs" >hb</text>
<text x="686.2" y="269.2" textLength="42.8" lengthAdjust="spacingAndGlyphs" >hb-tratt</text>
<text x="686.2" y="286.2" textLength="33.4" lengthAdjust="spacingAndGlyphs" >quote</text>
<text x="648.4" y="653.7" textLength="84.6" lengthAdjust="spacingAndGlyphs" >Property Editor</text>
<text x="654.7" y="685.5" textLength="54.2" lengthAdjust="spacingAndGlyphs" >Selection:</text>
<text x="720.6" y="685.5" textLength="69.4" lengthAdjust="spacingAndGlyphs" >No Selection</text>
<text x="654.7" y="713.6" textLength="104.2" lengthAdjust="spacingAndGlyphs" style="color:#b9b5b1;" >General Properties</text>
<text x="716.3" y="745.6" textLength="33.5" lengthAdjust="spacingAndGlyphs" style="color:#b9b5b1;" >Layer:</text>
<text x="717.2" y="772.6" textLength="32.6" lengthAdjust="spacingAndGlyphs" style="color:#b9b5b1;" >Color:</text>
<text x="685.2" y="799.6" textLength="64.6" lengthAdjust="spacingAndGlyphs" style="color:#b9b5b1;" >Lineweight:</text>
<text x="699.0" y="826.6" textLength="50.8" lengthAdjust="spacingAndGlyphs" style="color:#b9b5b1;" >Linetype:</text>
<text x="667.0" y="853.6" textLength="82.8" lengthAdjust="spacingAndGlyphs" style="color:#b9b5b1;" >Linetype Scale:</text>
<text x="681.0" y="880.6" textLength="68.8" lengthAdjust="spacingAndGlyphs" style="color:#b9b5b1;" >Draw Order:</text>
<text x="707.0" y="907.6" textLength="42.8" lengthAdjust="spacingAndGlyphs" style="color:#b9b5b1;" >Handle:</text>
<text x="781.6" y="772.6" textLength="46.8" lengthAdjust="spacingAndGlyphs" style="color:#b9b5b1;" >By Layer</text>
<text x="781.6" y="799.6" textLength="46.8" lengthAdjust="spacingAndGlyphs" style="color:#b9b5b1;" >By Layer</text>
<text x="761.0" y="826.6" textLength="47.9" lengthAdjust="spacingAndGlyphs" style="color:#b9b5b1;" >By Layer</text>
<g style="will-change:transform"><text x="149.2" y="190" textLength="6.6" lengthAdjust="spacingAndGlyphs">0</text>
<text x="186.9" y="190" textLength="13.2" lengthAdjust="spacingAndGlyphs">20</text>
<text x="228.9" y="190" textLength="13.2" lengthAdjust="spacingAndGlyphs">40</text>
<text x="269.9" y="190" textLength="13.2" lengthAdjust="spacingAndGlyphs">60</text>
<text x="311.9" y="190" textLength="13.2" lengthAdjust="spacingAndGlyphs">80</text>
<text x="350.6" y="190" textLength="19.8" lengthAdjust="spacingAndGlyphs">100</text>
<text x="391.6" y="190" textLength="19.8" lengthAdjust="spacingAndGlyphs">120</text>
<text x="433.6" y="190" textLength="19.8" lengthAdjust="spacingAndGlyphs">140</text>
<text x="475.6" y="190" textLength="19.8" lengthAdjust="spacingAndGlyphs">160</text>
<text x="516.6" y="190" textLength="19.8" lengthAdjust="spacingAndGlyphs">180</text>
<text x="558.6" y="190" textLength="19.8" lengthAdjust="spacingAndGlyphs">200</text>
<text x="600.6" y="190" textLength="19.8" lengthAdjust="spacingAndGlyphs">220</text>
<text transform="translate(114.8 857.8) rotate(-90)" textLength="6.5" lengthAdjust="spacingAndGlyphs">0</text>
<text transform="translate(114.8 819.0) rotate(-90)" textLength="13.0" lengthAdjust="spacingAndGlyphs">20</text>
<text transform="translate(114.8 777.0) rotate(-90)" textLength="13.0" lengthAdjust="spacingAndGlyphs">40</text>
<text transform="translate(114.8 736.0) rotate(-90)" textLength="13.0" lengthAdjust="spacingAndGlyphs">60</text>
<text transform="translate(114.8 694.0) rotate(-90)" textLength="13.0" lengthAdjust="spacingAndGlyphs">80</text>
<text transform="translate(114.8 656.2) rotate(-90)" textLength="19.5" lengthAdjust="spacingAndGlyphs">100</text>
<text transform="translate(114.8 614.2) rotate(-90)" textLength="19.5" lengthAdjust="spacingAndGlyphs">120</text>
<text transform="translate(114.8 572.2) rotate(-90)" textLength="19.5" lengthAdjust="spacingAndGlyphs">140</text>
<text transform="translate(114.8 531.2) rotate(-90)" textLength="19.5" lengthAdjust="spacingAndGlyphs">160</text>
<text transform="translate(114.8 489.2) rotate(-90)" textLength="19.5" lengthAdjust="spacingAndGlyphs">180</text>
<text transform="translate(114.8 447.2) rotate(-90)" textLength="19.5" lengthAdjust="spacingAndGlyphs">200</text>
<text transform="translate(114.8 406.2) rotate(-90)" textLength="19.5" lengthAdjust="spacingAndGlyphs">220</text>
<text transform="translate(114.8 364.2) rotate(-90)" textLength="19.5" lengthAdjust="spacingAndGlyphs">240</text>
<text transform="translate(114.8 323.2) rotate(-90)" textLength="19.5" lengthAdjust="spacingAndGlyphs">260</text>
<text transform="translate(114.8 281.2) rotate(-90)" textLength="19.5" lengthAdjust="spacingAndGlyphs">280</text>
<text transform="translate(114.8 239.2) rotate(-90)" textLength="19.5" lengthAdjust="spacingAndGlyphs">300</text>
<text x="348.5" y="242.8" style="font-size:20.5px;fill:#000;stroke:none">z</text>
<text x="154.6" y="528.8" style="font-size:20.5px;fill:#000;stroke:none">x</text>
<text x="552" y="523" style="font-size:20.5px;fill:#000;stroke:none">y</text>
<g transform="translate(58 422)"><text x="4.6" y="34.2" class="dj" style="font-size:11.5px;fill:#000;stroke:none" >1</text></g>
<g transform="translate(58 422)"><text x="28.3" y="22.7" class="dj" style="font-size:11.5px;fill:#000;stroke:none" >2</text></g>
<g transform="translate(18 566)"><text x="6.8" y="14" class="dj" style="font-size:12.5px;fill:#000;stroke:none" >y</text></g>
<g transform="translate(18 566)"><text x="26.9" y="33.6" class="dj" style="font-size:12.5px;fill:#000;stroke:none" >x</text></g>
<g transform="translate(58 566)"><text x="9.6" y="19.3" class="dj" style="font-size:12.5px;fill:#000;stroke:none" >r</text></g>
<g transform="translate(58 566)"><text x="21.6" y="26.3" class="dj" style="font-size:12.5px;fill:#000;stroke:none" >a</text></g>
<g transform="translate(18 614)"><text x="26.2" y="22.7" class="dj" style="font-size:11px;fill:#000;stroke:none" >2</text></g>
<g transform="translate(18 614)"><text x="14.4" y="31.6" class="dj" style="font-size:11px;fill:#000;stroke:none" >1</text></g>
<g transform="translate(58 614)"><text x="20.1" y="16.3" class="dj" style="font-size:11px;fill:#000;stroke:none" >2</text></g>
<g transform="translate(58 614)"><text x="7.7" y="24.8" class="dj" style="font-size:11px;fill:#000;stroke:none" >1</text></g>
<text x="376.6" y="35.5" textLength="186.9" lengthAdjust="spacingAndGlyphs" style="font-size:15px;color:#ffffff;font-weight:bold;" >piramide su xz.dxf * - QCAD</text>
<text x="23.5" y="542.5" textLength="29.1" lengthAdjust="spacingAndGlyphs" style="font-size:12.5px;" class="dj">Auto</text></g>
</svg>
</body></html>
